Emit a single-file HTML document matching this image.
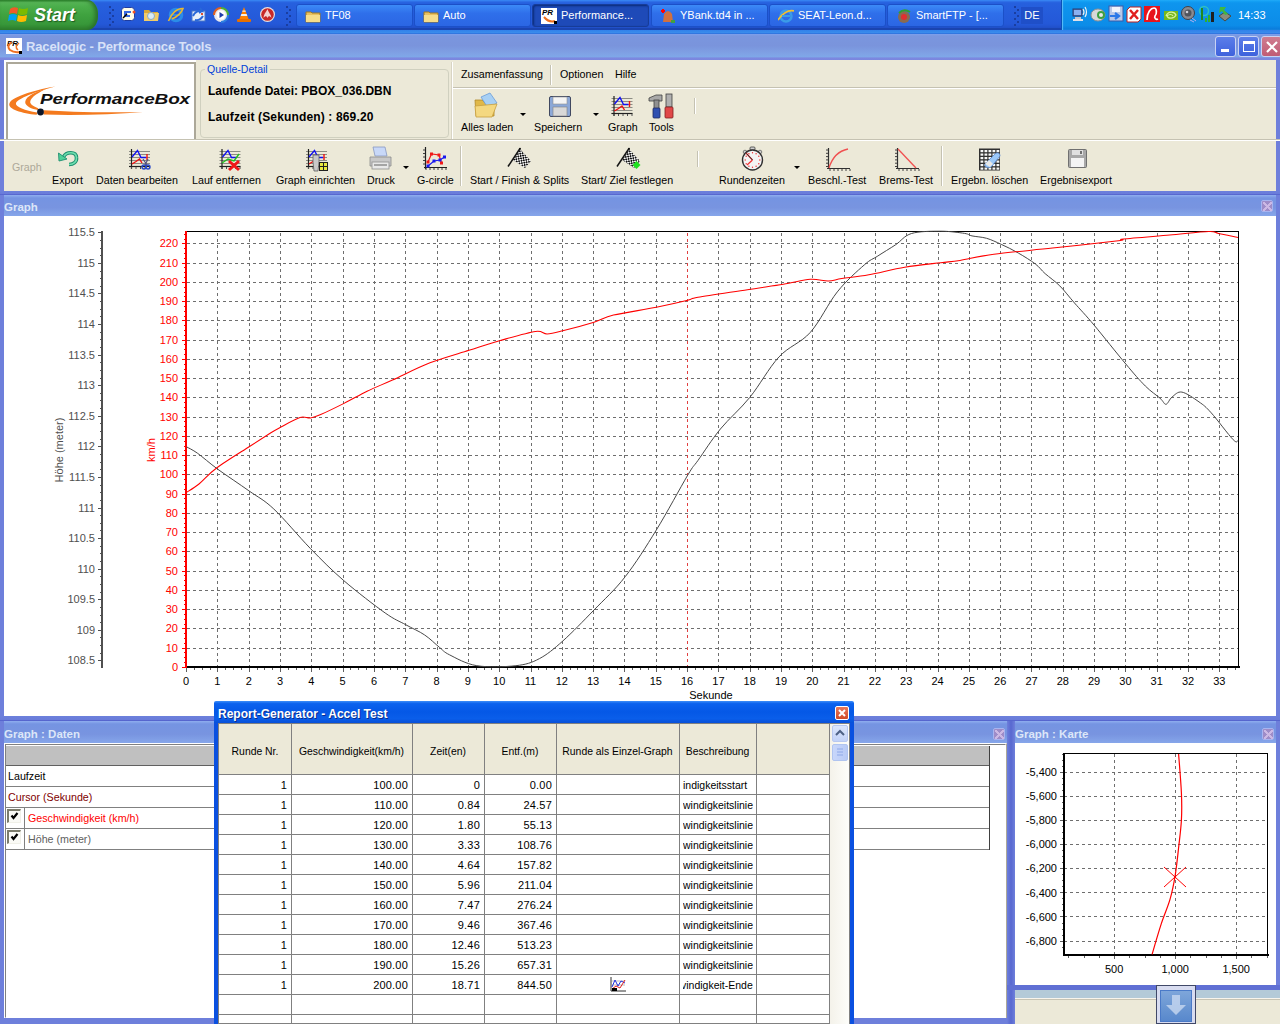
<!DOCTYPE html><html><head><meta charset="utf-8"><title>Racelogic - Performance Tools</title><style>

*{box-sizing:border-box;margin:0;padding:0}
html,body{width:1280px;height:1024px;overflow:hidden;background:#ECE9D8;font-family:"Liberation Sans", sans-serif;font-size:11px;color:#000}
.a{position:absolute}
.gl{position:absolute;font-size:11px;line-height:14px;white-space:nowrap;color:#000}
.r{text-align:right} .c{text-align:center}
.tb{position:absolute;top:4px;height:23px;width:117px;border-radius:3px;background:linear-gradient(#3C8AF7,#2F6FEA 40%,#2B66E4);border:1px solid #1B50C8;color:#fff;font-size:11px;line-height:21px;padding-left:28px;white-space:nowrap;overflow:hidden}
.tb.act{background:#1E4AB8;border-color:#173C98;box-shadow:inset 1px 1px 2px #0A2A78}
.tbi{position:absolute;left:8px;top:3px;width:16px;height:16px}
.ph{position:absolute;height:23px;background:linear-gradient(#8FAEEF 0,#7594E2 3px,#7894E0 60%,#86A6EA 100%);color:#DCE6F8;font-weight:bold;font-size:11.5px;padding-top:2px;padding-left:0px;white-space:nowrap;overflow:hidden}
.pc{position:absolute;width:12px;height:12px;background:#9E8CC8;border:1px solid #A8B4F0;border-radius:2px} .pc:after{content:'';position:absolute;left:1px;top:1px;width:9px;height:9px;background:linear-gradient(45deg,transparent 40%,#CCB8E4 40%,#CCB8E4 60%,transparent 60%),linear-gradient(-45deg,transparent 40%,#CCB8E4 40%,#CCB8E4 60%,transparent 60%)}
.tl{position:absolute;font-size:10.7px;line-height:13px;white-space:nowrap}
.sep{position:absolute;width:2px;border-left:1px solid #C5C2B2;border-right:1px solid #fff}
.cell{position:absolute;height:19px;line-height:19px;font-size:11px;white-space:nowrap;overflow:hidden;text-align:right;padding-right:4px}

</style></head><body>
<div class="a" style="left:0;top:0;width:1280px;height:30px;background:linear-gradient(#3A8BF5 0,#2A67E2 2px,#2660DE 10%,#2458D8 80%,#1F4BC0 100%)"></div>
<div class="a" style="left:0;top:28px;width:1280px;height:6px;background:linear-gradient(#1A44B0 0,#1A44B0 28%,#3282EA 35%,#3A8CEC 80%,#2A68D8 100%)"></div>
<div class="a" style="left:0;top:0;width:98px;height:30px;border-radius:0 11px 11px 0/0 14px 14px 0;background:linear-gradient(#2C8A2C 0,#58B858 8%,#4BAE4B 20%,#3FA23F 50%,#38983A 80%,#2E822E 100%);box-shadow:inset -3px 0 4px #2A702A"></div>
<svg class="a" style="left:8px;top:5px" width="22" height="20" viewBox="0 0 22 20">
<path d="M2 4 Q5 1 10 3 L9 9 Q5 7 1 9Z" fill="#F05A28"/><path d="M11 3 Q15 5 20 3 L19 9 Q14 11 10 9Z" fill="#7CBB00"/>
<path d="M1 10 Q5 8 9 10 L8 16 Q4 14 0 16Z" fill="#00A1F1"/><path d="M10 10 Q14 12 19 10 L18 16 Q13 18 9 16Z" fill="#FFBB00"/></svg>
<div class="a" style="left:34px;top:4px;font-size:18px;line-height:22px;font-style:italic;font-weight:bold;color:#fff;text-shadow:1px 1px 1px #1E5A1E">Start</div>
<div class="a" style="left:109px;top:6px;width:2px;height:2px;background:#1A3EA0"></div>
<div class="a" style="left:112px;top:9px;width:2px;height:2px;background:#1A3EA0"></div>
<div class="a" style="left:109px;top:12px;width:2px;height:2px;background:#1A3EA0"></div>
<div class="a" style="left:112px;top:15px;width:2px;height:2px;background:#1A3EA0"></div>
<div class="a" style="left:109px;top:18px;width:2px;height:2px;background:#1A3EA0"></div>
<div class="a" style="left:112px;top:21px;width:2px;height:2px;background:#1A3EA0"></div>
<div class="a" style="left:109px;top:24px;width:2px;height:2px;background:#1A3EA0"></div>
<div class="a" style="left:286px;top:6px;width:2px;height:2px;background:#1A3EA0"></div>
<div class="a" style="left:289px;top:9px;width:2px;height:2px;background:#1A3EA0"></div>
<div class="a" style="left:286px;top:12px;width:2px;height:2px;background:#1A3EA0"></div>
<div class="a" style="left:289px;top:15px;width:2px;height:2px;background:#1A3EA0"></div>
<div class="a" style="left:286px;top:18px;width:2px;height:2px;background:#1A3EA0"></div>
<div class="a" style="left:289px;top:21px;width:2px;height:2px;background:#1A3EA0"></div>
<div class="a" style="left:286px;top:24px;width:2px;height:2px;background:#1A3EA0"></div>
<div class="a" style="left:1014px;top:6px;width:2px;height:2px;background:#1A3EA0"></div>
<div class="a" style="left:1017px;top:9px;width:2px;height:2px;background:#1A3EA0"></div>
<div class="a" style="left:1014px;top:12px;width:2px;height:2px;background:#1A3EA0"></div>
<div class="a" style="left:1017px;top:15px;width:2px;height:2px;background:#1A3EA0"></div>
<div class="a" style="left:1014px;top:18px;width:2px;height:2px;background:#1A3EA0"></div>
<div class="a" style="left:1017px;top:21px;width:2px;height:2px;background:#1A3EA0"></div>
<div class="a" style="left:1014px;top:24px;width:2px;height:2px;background:#1A3EA0"></div>
<svg class="a" style="left:120px;top:6px" width="17" height="17">
<rect x="1.5" y="1.5" width="13" height="13" rx="3" fill="#FFFDE8" stroke="#1E3CA0"/><path d="M4 5 H11 V7 H7 V9 H10 V11 H4Z" fill="#3A6AE0"/><path d="M7 8 L3 12" stroke="#000" stroke-width="1.5"/><circle cx="14" cy="6" r="1.5" fill="#F05020"/></svg>
<svg class="a" style="left:143px;top:7px" width="17" height="16">
<path d="M1 3 H6 L8 5 H15 V14 H1Z" fill="#D8A838"/><path d="M1 6 H16 L15 14 H1Z" fill="#F2CC68"/><circle cx="8" cy="9" r="3.5" fill="#D8ECF8" stroke="#8AA8C0"/></svg>
<svg class="a" style="left:167px;top:6px" width="17" height="17">
<circle cx="9" cy="9" r="5.8" fill="none" stroke="#2A8CE8" stroke-width="3"/><rect x="5" y="8" width="8" height="2" fill="#2A8CE8"/><path d="M1.5 15 C4 8 10 2 16 2.5 C15 6 10 11 5 13" fill="none" stroke="#E8B830" stroke-width="1.6"/></svg>
<svg class="a" style="left:190px;top:6px" width="16" height="17">
<rect x="2" y="5" width="13" height="10" fill="#E8F0FA" stroke="#4A78C8"/><path d="M3 10 Q6 4 12 5 L10 2 M12 5 L9 7" stroke="#2A68D8" stroke-width="2" fill="none"/><path d="M13 10 Q10 15 5 14" stroke="#2A68D8" stroke-width="2" fill="none"/><rect x="11" y="7" width="2" height="2" fill="#E05030"/></svg>
<svg class="a" style="left:213px;top:6px" width="16" height="17">
<circle cx="8" cy="9" r="7" fill="#E8E8EE"/><path d="M1 9 A7 7 0 0 1 8 2" stroke="#E06020" stroke-width="2" fill="none"/><path d="M8 2 A7 7 0 0 1 15 9" stroke="#50B030" stroke-width="2" fill="none"/><path d="M15 9 A7 7 0 0 1 8 16" stroke="#3080E0" stroke-width="2" fill="none"/><circle cx="8" cy="9" r="4.5" fill="#fff"/><path d="M6.5 6 L11 9 L6.5 12Z" fill="#1E3CA8"/></svg>
<svg class="a" style="left:236px;top:6px" width="16" height="17">
<path d="M8 1 L13 14 H3Z" fill="#FF8000"/><path d="M5.3 8 H10.7 L11.3 10 H4.7Z" fill="#F0F0F0"/><path d="M6.6 4.5 H9.4 L9.8 5.8 H6.2Z" fill="#F0F0F0"/><rect x="1" y="13" width="14" height="3" rx="1" fill="#E87000"/></svg>
<svg class="a" style="left:259px;top:6px" width="17" height="17">
<circle cx="8.5" cy="8.5" r="7.5" fill="#E8E0E0"/><circle cx="8.5" cy="8.5" r="6.3" fill="#C82828"/><path d="M4.5 12 C5 7 8 5 8.5 3 C9 6 12 8 12.5 12 C11 10 9.5 9.5 8.5 12 C7.5 9.5 6 10 4.5 12Z" fill="#F4D0D0"/></svg>
<div class="tb" style="left:296px"><svg class="tbi" width="16" height="16"><path d="M1 4 L6 4 L7 5 L15 5 L15 14 L1 14Z" fill="#E8C060" stroke="#A07820" stroke-width="1"/><path d="M1 7 L15 7 L15 14 L1 14Z" fill="#F6DC8A"/></svg>TF08</div>
<div class="tb" style="left:414px"><svg class="tbi" width="16" height="16"><path d="M1 4 L6 4 L7 5 L15 5 L15 14 L1 14Z" fill="#E8C060" stroke="#A07820" stroke-width="1"/><path d="M1 7 L15 7 L15 14 L1 14Z" fill="#F6DC8A"/></svg>Auto</div>
<div class="tb act" style="left:532px"><svg class="tbi" width="16" height="16"><rect width="16" height="16" fill="#fff"/><text x="1" y="7" font-size="8" font-weight="bold" font-style="italic" font-family="Liberation Sans">PR</text><path d="M3 9 Q8 15 14 13" stroke="#F07020" stroke-width="2" fill="none"/><rect x="13" y="13" width="3" height="3" fill="#000"/></svg>Performance...</div>
<div class="tb" style="left:651px"><svg class="tbi" width="16" height="16"><path d="M4 6 Q8 0 12 6 L13 14 L3 14Z" fill="#D07040"/><path d="M1 3 L5 3 M3 1 L3 5" stroke="#f00" stroke-width="2"/><rect x="11" y="12" width="4" height="3" fill="#40A040"/></svg>YBank.td4 in ...</div>
<div class="tb" style="left:769px"><svg class="tbi" width="16" height="16"><circle cx="8" cy="8" r="5.5" fill="none" stroke="#3A9BE8" stroke-width="2.5"/><path d="M0 12 Q8 1 16 3" fill="none" stroke="#F0C030" stroke-width="1.8"/><rect x="4" y="7" width="8" height="2" fill="#3A9BE8"/></svg>SEAT-Leon.d...</div>
<div class="tb" style="left:887px"><svg class="tbi" width="16" height="16"><circle cx="8" cy="9" r="6" fill="#8A6A50"/><path d="M3 5 Q8 0 14 4" stroke="#30A030" stroke-width="2" fill="none"/><circle cx="8" cy="9" r="3" fill="#E03030"/></svg>SmartFTP - [...</div>
<div class="a" style="left:1021px;top:7px;width:22px;height:17px;background:#1F4FC8;color:#fff;font-size:11px;line-height:17px;text-align:center">DE</div>
<div class="a" style="left:1061px;top:0;width:219px;height:30px;background:linear-gradient(#18A8F8 0,#0E95EE 10%,#0C8CE8 85%,#0A78D8 100%);border-left:1px solid #0A50B8;box-shadow:inset 1px 0 1px #5CC0F8"></div>
<svg class="a" style="left:1072px;top:6px" width="17" height="17">
<rect x="1" y="3" width="9" height="7" fill="#5870A8" stroke="#2A3A70"/><rect x="2" y="4" width="7" height="5" fill="#8AB0F0"/><rect x="3" y="11" width="6" height="2" fill="#C8C8D0"/><rect x="1" y="13" width="10" height="2" fill="#E0E0E8"/><path d="M11 3 Q13 6 11 9 M13 1 Q16 6 13 11" stroke="#F0F0F0" stroke-width="1.2" fill="none"/></svg>
<svg class="a" style="left:1090px;top:6px" width="16" height="17"><ellipse cx="8" cy="9" rx="7" ry="6" fill="#D8D8D8" stroke="#909090"/><circle cx="11" cy="9" r="4" fill="#3EA040"/><circle cx="11" cy="9" r="2" fill="#E8E8E8"/></svg>
<svg class="a" style="left:1108px;top:5px" width="16" height="18"><rect x="1" y="1" width="14" height="15" fill="#B8C8E8" stroke="#3A5AA8"/><rect x="4" y="2" width="8" height="5" fill="#F0F4FC"/><path d="M2 11 H10 M7 8 L11 11 L7 14" stroke="#2A78E8" stroke-width="2.2" fill="none"/></svg>
<svg class="a" style="left:1126px;top:6px" width="16" height="17"><path d="M1 4 L4 1 H15 V13 L12 16 H1Z" fill="#fff" stroke="#C02020"/><path d="M4 4 L12 13 M12 4 L4 13" stroke="#E02020" stroke-width="2.5"/></svg>
<svg class="a" style="left:1144px;top:6px" width="16" height="16"><rect width="16" height="16" fill="#E8141C"/><path d="M3 14 C3 6 7 2 10 2 C13 2 13 8 11 10 C10 12 12 14 14 13" stroke="#fff" stroke-width="1.7" fill="none"/></svg>
<svg class="a" style="left:1163px;top:7px" width="16" height="15"><path d="M1 4 H15 V13 H1Z" fill="#78B81C"/><path d="M3 9 C5 4 11 4 13 8 C11 12 5 12 4 9 C6 7 9 7 10 9" stroke="#D8F0A0" stroke-width="1.2" fill="none"/></svg>
<svg class="a" style="left:1180px;top:5px" width="17" height="18"><circle cx="8" cy="8" r="6.5" fill="#8A8A90" stroke="#404048"/><circle cx="8" cy="8" r="3.5" fill="#50545C"/><circle cx="7" cy="7" r="1.3" fill="#D0D0D8"/><path d="M12 13 L16 16 M10 15 L14 17" stroke="#B0B0F0" stroke-width="1"/></svg>
<svg class="a" style="left:1198px;top:5px" width="17" height="18"><circle cx="6" cy="6" r="4.5" fill="none" stroke="#30C0C0" stroke-width="1.5"/><rect x="3" y="3" width="2" height="12" fill="#208820"/><rect x="7" y="13" width="2" height="4" fill="#30B030"/><rect x="10" y="10" width="2" height="7" fill="#30B030"/><rect x="13" y="7" width="3" height="10" fill="#202020"/></svg>
<svg class="a" style="left:1216px;top:5px" width="17" height="18"><path d="M3 11 L9 7 L15 11 L9 16Z" fill="#8C8C7C" stroke="#4A4A40"/><path d="M4 2 L10 2 L8 5 L12 9 L9 10 L6 6 L3 8Z" fill="#40B840"/></svg>
<div class="a" style="left:1238px;top:8px;color:#fff;font-size:11px;line-height:14px">14:33</div>
<div class="a" style="left:0;top:34px;width:1280px;height:26px;background:linear-gradient(#7EA0EC 0,#7A96DE 2px,#7A94DC 45%,#80A4E6 80%,#7EA8E8 88%,#7C88E0 92%,#7A86DE 100%)"></div>
<svg class="a" style="left:6px;top:38px" width="16" height="16"><rect width="16" height="16" fill="#fff"/><text x="1" y="7.5" font-size="8" font-weight="bold" font-style="italic" font-family="Liberation Sans">PR</text><path d="M6 4 Q0 8 4 12 Q8 15 14 14" stroke="#F07020" stroke-width="2" fill="none"/><path d="M13 5 Q8 9 12 12" stroke="#F07020" stroke-width="1.5" fill="none"/><rect x="13" y="13" width="3" height="3" fill="#000"/></svg>
<div class="a" style="left:26px;top:39px;font-size:13px;line-height:16px;font-weight:bold;color:#D8E2F8;letter-spacing:-0.15px">Racelogic - Performance Tools</div>
<div class="a" style="left:1215px;top:36px;width:21px;height:21px;border-radius:3px;background:linear-gradient(#5B7EEA,#3E62DC);border:1px solid #C8D2F4"><div class="a" style="left:5px;top:12px;width:8px;height:3px;background:#fff"></div></div>
<div class="a" style="left:1238px;top:36px;width:21px;height:21px;border-radius:3px;background:linear-gradient(#5B7EEA,#3E62DC);border:1px solid #C8D2F4"><div class="a" style="left:4px;top:4px;width:12px;height:11px;border:1px solid #fff;border-top:3px solid #fff"></div></div>
<div class="a" style="left:1261px;top:36px;width:21px;height:21px;border-radius:3px;background:linear-gradient(#D07C90,#C05C74);border:1px solid #C8D2F4"><svg width="21" height="21" style="position:absolute;left:0;top:0"><path d="M5 5 L15 15 M15 5 L5 15" stroke="#fff" stroke-width="2.2"/></svg></div>
<div class="a" style="left:0;top:60px;width:4px;height:964px;background:#6E7FDB"></div>
<div class="a" style="left:1276px;top:60px;width:4px;height:930px;background:#6E7FDB"></div>
<div class="a" style="left:4px;top:60px;width:192px;height:81px;background:#fff;border-right:1px solid #fff"></div>
<div class="a" style="left:6px;top:62px;width:190px;height:79px;border:2px solid #ACA899;border-right-color:#ACA899;background:#fff"></div>
<svg class="a" style="left:0;top:0" width="200" height="140">
<path d="M55.3,86.6 C40,89 12,96 9.4,103.5 C7.5,109 22,113.5 36.7,114.8 L37.3,112.6 C25,110.5 15.5,107 15.9,103.5 C17,99 36,91.5 55.3,86.6 Z" fill="#F47A1E"/>
<path d="M47,88.6 C38,91 25.5,96 25.2,101.9 C25,106 32,109 38,109.9 L38.2,108.2 C33.5,106.2 30,104 30.2,101.9 C30.5,97 40,92 47,88.6 Z" fill="#F47A1E"/>
<path d="M43.5,110.2 C80,112.3 112,112.6 143,112.2 C112,114.2 80,115.8 43.5,114.6 Z" fill="#F47A1E"/>
<circle cx="40.5" cy="112" r="3.4" fill="#0E1628"/>
</svg>
<div class="a" style="left:39.5px;top:90.5px;font-size:14.6px;line-height:17px;font-weight:bold;font-style:italic;color:#111;transform:scaleX(1.30);transform-origin:0 0;letter-spacing:-0.1px">PerformanceBox</div>
<div class="a" style="left:200px;top:69px;width:249px;height:69px;border:1px solid #D0D0BF;border-radius:4px"></div>
<div class="a" style="left:205px;top:62px;padding:0 2px;background:#ECE9D8;color:#0040D8;font-size:10.5px;line-height:14px">Quelle-Detail</div>
<div class="a" style="left:208px;top:84px;font-size:12px;line-height:15px;font-weight:bold">Laufende Datei: PBOX_036.DBN</div>
<div class="a" style="left:208px;top:110px;font-size:12px;line-height:15px;font-weight:bold;letter-spacing:0.15px">Laufzeit (Sekunden) : 869.20</div>
<div class="a" style="left:451px;top:62px;width:2px;height:77px;border-left:1px solid #D8D4C4;border-right:1px solid #fff"></div>
<div class="a" style="left:453px;top:87px;width:823px;height:2px;border-top:1px solid #C5C2B2;border-bottom:1px solid #fff"></div>
<div class="a" style="left:0;top:139px;width:1280px;height:2px;border-top:1px solid #C5C2B2;border-bottom:1px solid #fff"></div>
<div class="tl a" style="left:461px;top:68px">Zusamenfassung</div>
<div class="sep" style="left:550px;top:65px;height:20px"></div>
<div class="tl a" style="left:560px;top:68px">Optionen</div>
<div class="tl a" style="left:615px;top:68px">Hilfe</div>
<div class="tl a" style="left:461px;top:121px">Alles laden</div>
<div class="tl a" style="left:534px;top:121px">Speichern</div>
<div class="tl a" style="left:608px;top:121px">Graph</div>
<div class="tl a" style="left:649px;top:121px">Tools</div>
<div class="a" style="left:520px;top:113px;width:0;height:0;border-left:3px solid transparent;border-right:3px solid transparent;border-top:3px solid #000"></div>
<div class="a" style="left:593px;top:113px;width:0;height:0;border-left:3px solid transparent;border-right:3px solid transparent;border-top:3px solid #000"></div>
<div class="sep" style="left:694px;top:98px;height:16px"></div>
<div class="tl a" style="left:52px;top:174px">Export</div>
<div class="tl a" style="left:96px;top:174px">Daten bearbeiten</div>
<div class="tl a" style="left:192px;top:174px">Lauf entfernen</div>
<div class="tl a" style="left:276px;top:174px">Graph einrichten</div>
<div class="tl a" style="left:367px;top:174px">Druck</div>
<div class="tl a" style="left:417px;top:174px">G-circle</div>
<div class="tl a" style="left:470px;top:174px">Start / Finish &amp; Splits</div>
<div class="tl a" style="left:581px;top:174px">Start/ Ziel festlegen</div>
<div class="tl a" style="left:719px;top:174px">Rundenzeiten</div>
<div class="tl a" style="left:808px;top:174px">Beschl.-Test</div>
<div class="tl a" style="left:879px;top:174px">Brems-Test</div>
<div class="tl a" style="left:951px;top:174px">Ergebn. l&ouml;schen</div>
<div class="tl a" style="left:1040px;top:174px">Ergebnisexport</div>
<div class="tl a" style="left:12px;top:161px;color:#ACA899">Graph</div>
<div class="a" style="left:403px;top:166px;width:0;height:0;border-left:3px solid transparent;border-right:3px solid transparent;border-top:3px solid #000"></div>
<div class="a" style="left:794px;top:166px;width:0;height:0;border-left:3px solid transparent;border-right:3px solid transparent;border-top:3px solid #000"></div>
<div class="sep" style="left:460px;top:146px;height:40px"></div>
<div class="sep" style="left:697px;top:151px;height:16px"></div>
<div class="sep" style="left:941px;top:146px;height:40px"></div>
<svg class="a" style="left:0;top:0" width="1280" height="195"><path d="M475 100 H482 L484 102 H494 V116 H476Z" fill="#E0B848" stroke="#B08828" stroke-width=".8"/><path d="M481 97 L490 93 L497 103 L488 108Z" fill="#A8D0F4" stroke="#6A9CD8" stroke-width=".8"/><path d="M475 106 L497 104 L492 117 L476 117Z" fill="#F4D880" stroke="#C8A040" stroke-width=".8"/><rect x="549.5" y="96.5" width="21" height="20" rx="1.5" fill="#8CA8D8" stroke="#404860"/><rect x="553" y="97" width="14" height="7" fill="#F4F4F4" stroke="#909090" stroke-width=".6"/><rect x="553" y="107" width="14" height="9" fill="#D8D8D8" stroke="#808080" stroke-width=".6"/><path d="M611.5 98.5 H632.5" stroke="#8C8C84" stroke-width="1"/><path d="M611.5 101.5 H632.5" stroke="#8C8C84" stroke-width="1"/><path d="M611.5 104.5 H632.5" stroke="#8C8C84" stroke-width="1"/><path d="M611.5 107.5 H632.5" stroke="#8C8C84" stroke-width="1"/><path d="M611.5 110.5 H632.5" stroke="#8C8C84" stroke-width="1"/><path d="M611.5 113.5 H632.5" stroke="#8C8C84" stroke-width="1"/><path d="M614.0 96 V116" stroke="#202020" stroke-width="1.2"/><path d="M611.5 113.5 H632.5" stroke="#202020" stroke-width="1.2"/><path d="M614.0 114 V116" stroke="#505050"/><path d="M618.5 114 V116" stroke="#505050"/><path d="M623.0 114 V116" stroke="#505050"/><path d="M627.5 114 V116" stroke="#505050"/><path d="M632.0 114 V116" stroke="#505050"/><path d="M614.5 104 L620.0 97.5 L623.5 104.5 H628.5" stroke="#1010F0" stroke-width="1.4" fill="none"/><path d="M614.5 111 L618.5 108.5 L622.0 106 L624.5 110 M629.5 101 V107" stroke="#F01010" stroke-width="1.4" fill="none"/><path d="M649 98 L656 95 H662 V101 H656 L649 101Z" fill="#A8A8A8" stroke="#404040" stroke-width=".8"/><rect x="654" y="100" width="5" height="9" fill="#909090" stroke="#404040" stroke-width=".8"/><rect x="653" y="108" width="7" height="10" rx="1" fill="#3050B0" stroke="#202860" stroke-width=".8"/><rect x="666" y="94" width="6" height="13" fill="#B0B0B0" stroke="#404040" stroke-width=".8"/><rect x="665" y="107" width="8" height="11" rx="1" fill="#E04848" stroke="#802020" stroke-width=".8"/><path d="M63.5 157 C66 151.5 76 151 76.5 157.5 C77 162 73.5 164.5 69 164.5" stroke="#1E9070" stroke-width="3.6" fill="none"/><path d="M63.5 157 C66 151.5 76 151 76.5 157.5 C77 162 73.5 164.5 69 164.5" stroke="#70E0B0" stroke-width="1.6" fill="none"/><path d="M58.5 153 L59 161 L67 159Z" fill="#50D098" stroke="#1E9070" stroke-width=".9"/><path d="M129 151.5 H150" stroke="#8C8C84" stroke-width="1"/><path d="M129 154.5 H150" stroke="#8C8C84" stroke-width="1"/><path d="M129 157.5 H150" stroke="#8C8C84" stroke-width="1"/><path d="M129 160.5 H150" stroke="#8C8C84" stroke-width="1"/><path d="M129 163.5 H150" stroke="#8C8C84" stroke-width="1"/><path d="M129 166.5 H150" stroke="#8C8C84" stroke-width="1"/><path d="M131.5 149 V169" stroke="#202020" stroke-width="1.2"/><path d="M129 166.5 H150" stroke="#202020" stroke-width="1.2"/><path d="M131.5 167 V169" stroke="#505050"/><path d="M136.0 167 V169" stroke="#505050"/><path d="M140.5 167 V169" stroke="#505050"/><path d="M145.0 167 V169" stroke="#505050"/><path d="M149.5 167 V169" stroke="#505050"/><path d="M132 157 L137.5 150.5 L141 157.5 H146" stroke="#1010F0" stroke-width="1.4" fill="none"/><path d="M132 164 L136 161.5 L139.5 159 L142 163 M147 154 V160" stroke="#F01010" stroke-width="1.4" fill="none"/><circle cx="144" cy="167" r="2" fill="none" stroke="#2848C8" stroke-width="1.4"/><circle cx="148" cy="167" r="2" fill="none" stroke="#2848C8" stroke-width="1.4"/><path d="M143 159 L147 165 M148 159 L145 165" stroke="#505080" stroke-width="1.2"/><path d="M219.5 151.5 H240.5" stroke="#8C8C84" stroke-width="1"/><path d="M219.5 154.5 H240.5" stroke="#8C8C84" stroke-width="1"/><path d="M219.5 157.5 H240.5" stroke="#8C8C84" stroke-width="1"/><path d="M219.5 160.5 H240.5" stroke="#8C8C84" stroke-width="1"/><path d="M219.5 163.5 H240.5" stroke="#8C8C84" stroke-width="1"/><path d="M219.5 166.5 H240.5" stroke="#8C8C84" stroke-width="1"/><path d="M222.0 149 V169" stroke="#202020" stroke-width="1.2"/><path d="M219.5 166.5 H240.5" stroke="#202020" stroke-width="1.2"/><path d="M222.0 167 V169" stroke="#505050"/><path d="M226.5 167 V169" stroke="#505050"/><path d="M231.0 167 V169" stroke="#505050"/><path d="M235.5 167 V169" stroke="#505050"/><path d="M240.0 167 V169" stroke="#505050"/><path d="M222.5 157 L228.0 150.5 L231.5 157.5 H236.5" stroke="#1010F0" stroke-width="1.4" fill="none"/><path d="M222 163 L228 159 L234 161 L239 154" stroke="#20C020" stroke-width="1.4" fill="none"/><path d="M229 161 L239 170 M239 161 L229 170" stroke="#F01818" stroke-width="3"/><path d="M306 151.5 H327" stroke="#8C8C84" stroke-width="1"/><path d="M306 154.5 H327" stroke="#8C8C84" stroke-width="1"/><path d="M306 157.5 H327" stroke="#8C8C84" stroke-width="1"/><path d="M306 160.5 H327" stroke="#8C8C84" stroke-width="1"/><path d="M306 163.5 H327" stroke="#8C8C84" stroke-width="1"/><path d="M306 166.5 H327" stroke="#8C8C84" stroke-width="1"/><path d="M308.5 149 V169" stroke="#202020" stroke-width="1.2"/><path d="M306 166.5 H327" stroke="#202020" stroke-width="1.2"/><path d="M308.5 167 V169" stroke="#505050"/><path d="M313.0 167 V169" stroke="#505050"/><path d="M317.5 167 V169" stroke="#505050"/><path d="M322.0 167 V169" stroke="#505050"/><path d="M326.5 167 V169" stroke="#505050"/><path d="M309 157 L314.5 150.5 L318 157.5 H323" stroke="#1010F0" stroke-width="1.4" fill="none"/><path d="M309 164 L313 161.5 L316.5 159 L319 163 M324 154 V160" stroke="#F01010" stroke-width="1.4" fill="none"/><path d="M313 155 H319 V162 L318 171 H314 L313 162Z" fill="#C8C8C8" stroke="#606060" stroke-width=".8"/><rect x="319.5" y="162.5" width="8" height="8" fill="#E8E840" stroke="#202020"/><path d="M319.5 166.5 H327.5 M323.5 162.5 V170.5" stroke="#202020"/><path d="M373 147 H385 L387 156 H375Z" fill="#C8D8F8" stroke="#8898C0" stroke-width=".8"/><path d="M370 157 H391 V166 H370Z" fill="#C8C8C8" stroke="#8C8C8C" stroke-width=".8"/><rect x="372" y="162" width="17" height="7" fill="#E8E8E8" stroke="#909090" stroke-width=".8"/><path d="M374 165 H387" stroke="#606060"/><path d="M425.5 147 V169 M424 167.5 H447" stroke="#202020" stroke-width="1.2"/><path d="M426 168 V170" stroke="#404040"/><path d="M430 168 V170" stroke="#404040"/><path d="M434 168 V170" stroke="#404040"/><path d="M438 168 V170" stroke="#404040"/><path d="M442 168 V170" stroke="#404040"/><path d="M446 168 V170" stroke="#404040"/><path d="M423 150.0 H425" stroke="#404040"/><path d="M423 153.5 H425" stroke="#404040"/><path d="M423 157.0 H425" stroke="#404040"/><path d="M423 160.5 H425" stroke="#404040"/><path d="M423 164.0 H425" stroke="#404040"/><path d="M428 162 L431.5 154 L439 155 L441.5 163" stroke="#F01818" stroke-width="1.2" fill="none"/><rect x="426.5" y="160.5" width="3" height="3" fill="#F01818"/><rect x="430.0" y="152.5" width="3" height="3" fill="#F01818"/><rect x="437.5" y="153.5" width="3" height="3" fill="#F01818"/><rect x="440.0" y="161.5" width="3" height="3" fill="#F01818"/><path d="M428 166 L434 161 L440 160 L444.5 157" stroke="#1818F0" stroke-width="1.2" fill="none"/><rect x="426.5" y="164.5" width="3" height="3" fill="#1818F0"/><rect x="432.5" y="159.5" width="3" height="3" fill="#1818F0"/><rect x="438.5" y="158.5" width="3" height="3" fill="#1818F0"/><rect x="443.0" y="155.5" width="3" height="3" fill="#1818F0"/><defs><pattern id="chk508" width="3.4" height="3.4" patternUnits="userSpaceOnUse" patternTransform="rotate(35)"><rect width="3.4" height="3.4" fill="#F4F4F4"/><rect width="1.7" height="1.7" fill="#111"/><rect x="1.7" y="1.7" width="1.7" height="1.7" fill="#111"/></pattern></defs><path d="M520 149 L531 161 L525 168 L513 160Z" fill="url(#chk508)"/><path d="M508 166.5 L520 148.5" stroke="#151515" stroke-width="1.5"/><circle cx="520" cy="148.8" r="1" fill="#111"/><defs><pattern id="chk617" width="3.4" height="3.4" patternUnits="userSpaceOnUse" patternTransform="rotate(35)"><rect width="3.4" height="3.4" fill="#F4F4F4"/><rect width="1.7" height="1.7" fill="#111"/><rect x="1.7" y="1.7" width="1.7" height="1.7" fill="#111"/></pattern></defs><path d="M629 149 L640 161 L634 168 L622 160Z" fill="url(#chk617)"/><path d="M617 166.5 L629 148.5" stroke="#151515" stroke-width="1.5"/><circle cx="629" cy="148.8" r="1" fill="#111"/><path d="M636.5 161 L640.5 165 L636.5 169 L632.5 165Z" fill="#20E020"/><rect x="750" y="147" width="5" height="3" rx="1" fill="#D0D0D0" stroke="#404040" stroke-width=".8"/><circle cx="745" cy="152" r="1.8" fill="#D0D0D0" stroke="#404040" stroke-width=".6"/><circle cx="760" cy="152" r="1.8" fill="#D0D0D0" stroke="#404040" stroke-width=".6"/><circle cx="752.5" cy="160" r="10" fill="#F4F4F4" stroke="#303030" stroke-width="1.4"/><circle cx="759.8" cy="160.0" r=".7" fill="#F03030"/><circle cx="758.8" cy="163.7" r=".7" fill="#F03030"/><circle cx="756.1" cy="166.3" r=".7" fill="#F03030"/><circle cx="752.5" cy="167.3" r=".7" fill="#F03030"/><circle cx="748.9" cy="166.3" r=".7" fill="#F03030"/><circle cx="746.2" cy="163.7" r=".7" fill="#F03030"/><circle cx="745.2" cy="160.0" r=".7" fill="#F03030"/><circle cx="746.2" cy="156.3" r=".7" fill="#F03030"/><circle cx="748.9" cy="153.7" r=".7" fill="#F03030"/><circle cx="752.5" cy="152.7" r=".7" fill="#F03030"/><circle cx="756.1" cy="153.7" r=".7" fill="#F03030"/><circle cx="758.8" cy="156.3" r=".7" fill="#F03030"/><path d="M752.5 160 L746 153 M752.5 160 L747 165" stroke="#F03030" stroke-width="1.2"/><path d="M752.5 160 L746.5 153.5" stroke="#303030" stroke-width="1"/><path d="M828.5 148 V169 M827 168.5 H850" stroke="#303030" stroke-width="1.2"/><path d="M830 169 V171" stroke="#404040"/><path d="M834 169 V171" stroke="#404040"/><path d="M838 169 V171" stroke="#404040"/><path d="M842 169 V171" stroke="#404040"/><path d="M846 169 V171" stroke="#404040"/><path d="M850 169 V171" stroke="#404040"/><path d="M826 150.0 H828" stroke="#404040"/><path d="M826 153.3 H828" stroke="#404040"/><path d="M826 156.6 H828" stroke="#404040"/><path d="M826 159.9 H828" stroke="#404040"/><path d="M826 163.2 H828" stroke="#404040"/><path d="M826 166.5 H828" stroke="#404040"/><path d="M829 168 C832 158 838 151 848 149" stroke="#F05050" stroke-width="1.3" fill="none"/><path d="M897.5 148 V169 M896 168.5 H919" stroke="#303030" stroke-width="1.2"/><path d="M899 169 V171" stroke="#404040"/><path d="M903 169 V171" stroke="#404040"/><path d="M907 169 V171" stroke="#404040"/><path d="M911 169 V171" stroke="#404040"/><path d="M915 169 V171" stroke="#404040"/><path d="M919 169 V171" stroke="#404040"/><path d="M895 150.0 H897" stroke="#404040"/><path d="M895 153.3 H897" stroke="#404040"/><path d="M895 156.6 H897" stroke="#404040"/><path d="M895 159.9 H897" stroke="#404040"/><path d="M895 163.2 H897" stroke="#404040"/><path d="M895 166.5 H897" stroke="#404040"/><path d="M898 149 L916 168" stroke="#F05050" stroke-width="1.3" fill="none"/><rect x="979" y="148.5" width="21" height="22" fill="#303030"/><rect x="980.5" y="150.0" width="2.8" height="2.2" fill="#F8F8F8"/><rect x="980.5" y="153.5" width="2.8" height="2.2" fill="#F8F8F8"/><rect x="980.5" y="157.0" width="2.8" height="2.2" fill="#F8F8F8"/><rect x="980.5" y="160.5" width="2.8" height="2.2" fill="#F8F8F8"/><rect x="980.5" y="164.0" width="2.8" height="2.2" fill="#F8F8F8"/><rect x="980.5" y="167.5" width="2.8" height="2.2" fill="#F8F8F8"/><rect x="984.5" y="150.0" width="2.8" height="2.2" fill="#F8F8F8"/><rect x="984.5" y="153.5" width="2.8" height="2.2" fill="#F8F8F8"/><rect x="984.5" y="157.0" width="2.8" height="2.2" fill="#F8F8F8"/><rect x="984.5" y="160.5" width="2.8" height="2.2" fill="#F8F8F8"/><rect x="984.5" y="164.0" width="2.8" height="2.2" fill="#F8F8F8"/><rect x="984.5" y="167.5" width="2.8" height="2.2" fill="#F8F8F8"/><rect x="988.5" y="150.0" width="2.8" height="2.2" fill="#F8F8F8"/><rect x="988.5" y="153.5" width="2.8" height="2.2" fill="#F8F8F8"/><rect x="988.5" y="157.0" width="2.8" height="2.2" fill="#F8F8F8"/><rect x="988.5" y="160.5" width="2.8" height="2.2" fill="#F8F8F8"/><rect x="988.5" y="164.0" width="2.8" height="2.2" fill="#F8F8F8"/><rect x="988.5" y="167.5" width="2.8" height="2.2" fill="#F8F8F8"/><rect x="992.5" y="150.0" width="2.8" height="2.2" fill="#F8F8F8"/><rect x="992.5" y="153.5" width="2.8" height="2.2" fill="#F8F8F8"/><rect x="992.5" y="157.0" width="2.8" height="2.2" fill="#F8F8F8"/><rect x="992.5" y="160.5" width="2.8" height="2.2" fill="#F8F8F8"/><rect x="992.5" y="164.0" width="2.8" height="2.2" fill="#F8F8F8"/><rect x="992.5" y="167.5" width="2.8" height="2.2" fill="#F8F8F8"/><rect x="996.5" y="150.0" width="2.8" height="2.2" fill="#F8F8F8"/><rect x="996.5" y="153.5" width="2.8" height="2.2" fill="#F8F8F8"/><rect x="996.5" y="157.0" width="2.8" height="2.2" fill="#F8F8F8"/><rect x="996.5" y="160.5" width="2.8" height="2.2" fill="#F8F8F8"/><rect x="996.5" y="164.0" width="2.8" height="2.2" fill="#F8F8F8"/><rect x="996.5" y="167.5" width="2.8" height="2.2" fill="#F8F8F8"/><path d="M985 164 L995 154 C997 152 1000 153 1000 156 L992 166 C990 168 987 168 985 166Z" fill="#9CC8F8" stroke="#5888D0" stroke-width=".8"/><path d="M985 164 L989 160 L993 164 L990 167Z" fill="#E8E8E8"/><rect x="1068.5" y="149.5" width="18" height="18" rx="1" fill="#A8A8A8" stroke="#707070"/><rect x="1072" y="150" width="11" height="5" fill="#E0E0E0"/><rect x="1080" y="151" width="2" height="3" fill="#707070"/><rect x="1071" y="158" width="13" height="9" fill="#F4F4F4"/></svg>
<div class="a" style="left:0;top:191px;width:1280px;height:4px;background:linear-gradient(#6C80DC 0,#6A7CDA 70%,#4C5AC8 100%)"></div>
<div class="ph" style="left:4px;top:195px;width:1272px;height:21px;line-height:21px">Graph</div>
<div class="pc" style="left:1261px;top:200px"></div>
<div class="a" style="left:4px;top:216px;width:1272px;height:500px;background:#fff"></div>
<svg width="1280" height="1024" style="position:absolute;left:0;top:0" shape-rendering="crispEdges">
<line x1="187" y1="648.5" x2="1239" y2="648.5" stroke="#6e6e6e" stroke-dasharray="3,3"/>
<line x1="187" y1="628.5" x2="1239" y2="628.5" stroke="#6e6e6e" stroke-dasharray="3,3"/>
<line x1="187" y1="609.5" x2="1239" y2="609.5" stroke="#6e6e6e" stroke-dasharray="3,3"/>
<line x1="187" y1="590.5" x2="1239" y2="590.5" stroke="#6e6e6e" stroke-dasharray="3,3"/>
<line x1="187" y1="571.5" x2="1239" y2="571.5" stroke="#6e6e6e" stroke-dasharray="3,3"/>
<line x1="187" y1="551.5" x2="1239" y2="551.5" stroke="#6e6e6e" stroke-dasharray="3,3"/>
<line x1="187" y1="532.5" x2="1239" y2="532.5" stroke="#6e6e6e" stroke-dasharray="3,3"/>
<line x1="187" y1="513.5" x2="1239" y2="513.5" stroke="#6e6e6e" stroke-dasharray="3,3"/>
<line x1="187" y1="494.5" x2="1239" y2="494.5" stroke="#6e6e6e" stroke-dasharray="3,3"/>
<line x1="187" y1="474.5" x2="1239" y2="474.5" stroke="#6e6e6e" stroke-dasharray="3,3"/>
<line x1="187" y1="455.5" x2="1239" y2="455.5" stroke="#6e6e6e" stroke-dasharray="3,3"/>
<line x1="187" y1="436.5" x2="1239" y2="436.5" stroke="#6e6e6e" stroke-dasharray="3,3"/>
<line x1="187" y1="417.5" x2="1239" y2="417.5" stroke="#6e6e6e" stroke-dasharray="3,3"/>
<line x1="187" y1="397.5" x2="1239" y2="397.5" stroke="#6e6e6e" stroke-dasharray="3,3"/>
<line x1="187" y1="378.5" x2="1239" y2="378.5" stroke="#6e6e6e" stroke-dasharray="3,3"/>
<line x1="187" y1="359.5" x2="1239" y2="359.5" stroke="#6e6e6e" stroke-dasharray="3,3"/>
<line x1="187" y1="340.5" x2="1239" y2="340.5" stroke="#6e6e6e" stroke-dasharray="3,3"/>
<line x1="187" y1="320.5" x2="1239" y2="320.5" stroke="#6e6e6e" stroke-dasharray="3,3"/>
<line x1="187" y1="301.5" x2="1239" y2="301.5" stroke="#6e6e6e" stroke-dasharray="3,3"/>
<line x1="187" y1="282.5" x2="1239" y2="282.5" stroke="#6e6e6e" stroke-dasharray="3,3"/>
<line x1="187" y1="263.5" x2="1239" y2="263.5" stroke="#6e6e6e" stroke-dasharray="3,3"/>
<line x1="187" y1="243.5" x2="1239" y2="243.5" stroke="#6e6e6e" stroke-dasharray="3,3"/>
<line x1="217.5" y1="233" x2="217.5" y2="666" stroke="#6e6e6e" stroke-dasharray="3,3"/>
<line x1="249.5" y1="233" x2="249.5" y2="666" stroke="#6e6e6e" stroke-dasharray="3,3"/>
<line x1="280.5" y1="233" x2="280.5" y2="666" stroke="#6e6e6e" stroke-dasharray="3,3"/>
<line x1="311.5" y1="233" x2="311.5" y2="666" stroke="#6e6e6e" stroke-dasharray="3,3"/>
<line x1="343.5" y1="233" x2="343.5" y2="666" stroke="#6e6e6e" stroke-dasharray="3,3"/>
<line x1="374.5" y1="233" x2="374.5" y2="666" stroke="#6e6e6e" stroke-dasharray="3,3"/>
<line x1="405.5" y1="233" x2="405.5" y2="666" stroke="#6e6e6e" stroke-dasharray="3,3"/>
<line x1="437.5" y1="233" x2="437.5" y2="666" stroke="#6e6e6e" stroke-dasharray="3,3"/>
<line x1="468.5" y1="233" x2="468.5" y2="666" stroke="#6e6e6e" stroke-dasharray="3,3"/>
<line x1="499.5" y1="233" x2="499.5" y2="666" stroke="#6e6e6e" stroke-dasharray="3,3"/>
<line x1="531.5" y1="233" x2="531.5" y2="666" stroke="#6e6e6e" stroke-dasharray="3,3"/>
<line x1="562.5" y1="233" x2="562.5" y2="666" stroke="#6e6e6e" stroke-dasharray="3,3"/>
<line x1="593.5" y1="233" x2="593.5" y2="666" stroke="#6e6e6e" stroke-dasharray="3,3"/>
<line x1="624.5" y1="233" x2="624.5" y2="666" stroke="#6e6e6e" stroke-dasharray="3,3"/>
<line x1="656.5" y1="233" x2="656.5" y2="666" stroke="#6e6e6e" stroke-dasharray="3,3"/>
<line x1="687.5" y1="233" x2="687.5" y2="666" stroke="#e04040" stroke-dasharray="3,3"/>
<line x1="718.5" y1="233" x2="718.5" y2="666" stroke="#6e6e6e" stroke-dasharray="3,3"/>
<line x1="750.5" y1="233" x2="750.5" y2="666" stroke="#6e6e6e" stroke-dasharray="3,3"/>
<line x1="781.5" y1="233" x2="781.5" y2="666" stroke="#6e6e6e" stroke-dasharray="3,3"/>
<line x1="812.5" y1="233" x2="812.5" y2="666" stroke="#6e6e6e" stroke-dasharray="3,3"/>
<line x1="844.5" y1="233" x2="844.5" y2="666" stroke="#6e6e6e" stroke-dasharray="3,3"/>
<line x1="875.5" y1="233" x2="875.5" y2="666" stroke="#6e6e6e" stroke-dasharray="3,3"/>
<line x1="906.5" y1="233" x2="906.5" y2="666" stroke="#6e6e6e" stroke-dasharray="3,3"/>
<line x1="938.5" y1="233" x2="938.5" y2="666" stroke="#6e6e6e" stroke-dasharray="3,3"/>
<line x1="969.5" y1="233" x2="969.5" y2="666" stroke="#6e6e6e" stroke-dasharray="3,3"/>
<line x1="1000.5" y1="233" x2="1000.5" y2="666" stroke="#6e6e6e" stroke-dasharray="3,3"/>
<line x1="1031.5" y1="233" x2="1031.5" y2="666" stroke="#6e6e6e" stroke-dasharray="3,3"/>
<line x1="1063.5" y1="233" x2="1063.5" y2="666" stroke="#6e6e6e" stroke-dasharray="3,3"/>
<line x1="1094.5" y1="233" x2="1094.5" y2="666" stroke="#6e6e6e" stroke-dasharray="3,3"/>
<line x1="1125.5" y1="233" x2="1125.5" y2="666" stroke="#6e6e6e" stroke-dasharray="3,3"/>
<line x1="1157.5" y1="233" x2="1157.5" y2="666" stroke="#6e6e6e" stroke-dasharray="3,3"/>
<line x1="1188.5" y1="233" x2="1188.5" y2="666" stroke="#6e6e6e" stroke-dasharray="3,3"/>
<line x1="1219.5" y1="233" x2="1219.5" y2="666" stroke="#6e6e6e" stroke-dasharray="3,3"/>
<rect x="186" y="231" width="1053" height="1" fill="#000"/>
<rect x="1238" y="231" width="1" height="437" fill="#000"/>
<rect x="186" y="666" width="1054" height="2" fill="#000"/>
<rect x="185" y="231" width="2" height="437" fill="#ff0000"/>
<rect x="182" y="667" width="3" height="1" fill="#ff0000"/>
<rect x="184" y="662" width="1" height="1" fill="#ff0000"/>
<rect x="184" y="657" width="1" height="1" fill="#ff0000"/>
<rect x="184" y="652" width="1" height="1" fill="#ff0000"/>
<rect x="182" y="648" width="3" height="1" fill="#ff0000"/>
<rect x="184" y="643" width="1" height="1" fill="#ff0000"/>
<rect x="184" y="638" width="1" height="1" fill="#ff0000"/>
<rect x="184" y="633" width="1" height="1" fill="#ff0000"/>
<rect x="182" y="628" width="3" height="1" fill="#ff0000"/>
<rect x="184" y="624" width="1" height="1" fill="#ff0000"/>
<rect x="184" y="619" width="1" height="1" fill="#ff0000"/>
<rect x="184" y="614" width="1" height="1" fill="#ff0000"/>
<rect x="182" y="609" width="3" height="1" fill="#ff0000"/>
<rect x="184" y="604" width="1" height="1" fill="#ff0000"/>
<rect x="184" y="600" width="1" height="1" fill="#ff0000"/>
<rect x="184" y="595" width="1" height="1" fill="#ff0000"/>
<rect x="182" y="590" width="3" height="1" fill="#ff0000"/>
<rect x="184" y="585" width="1" height="1" fill="#ff0000"/>
<rect x="184" y="580" width="1" height="1" fill="#ff0000"/>
<rect x="184" y="575" width="1" height="1" fill="#ff0000"/>
<rect x="182" y="571" width="3" height="1" fill="#ff0000"/>
<rect x="184" y="566" width="1" height="1" fill="#ff0000"/>
<rect x="184" y="561" width="1" height="1" fill="#ff0000"/>
<rect x="184" y="556" width="1" height="1" fill="#ff0000"/>
<rect x="182" y="551" width="3" height="1" fill="#ff0000"/>
<rect x="184" y="547" width="1" height="1" fill="#ff0000"/>
<rect x="184" y="542" width="1" height="1" fill="#ff0000"/>
<rect x="184" y="537" width="1" height="1" fill="#ff0000"/>
<rect x="182" y="532" width="3" height="1" fill="#ff0000"/>
<rect x="184" y="527" width="1" height="1" fill="#ff0000"/>
<rect x="184" y="523" width="1" height="1" fill="#ff0000"/>
<rect x="184" y="518" width="1" height="1" fill="#ff0000"/>
<rect x="182" y="513" width="3" height="1" fill="#ff0000"/>
<rect x="184" y="508" width="1" height="1" fill="#ff0000"/>
<rect x="184" y="503" width="1" height="1" fill="#ff0000"/>
<rect x="184" y="498" width="1" height="1" fill="#ff0000"/>
<rect x="182" y="494" width="3" height="1" fill="#ff0000"/>
<rect x="184" y="489" width="1" height="1" fill="#ff0000"/>
<rect x="184" y="484" width="1" height="1" fill="#ff0000"/>
<rect x="184" y="479" width="1" height="1" fill="#ff0000"/>
<rect x="182" y="474" width="3" height="1" fill="#ff0000"/>
<rect x="184" y="470" width="1" height="1" fill="#ff0000"/>
<rect x="184" y="465" width="1" height="1" fill="#ff0000"/>
<rect x="184" y="460" width="1" height="1" fill="#ff0000"/>
<rect x="182" y="455" width="3" height="1" fill="#ff0000"/>
<rect x="184" y="450" width="1" height="1" fill="#ff0000"/>
<rect x="184" y="446" width="1" height="1" fill="#ff0000"/>
<rect x="184" y="441" width="1" height="1" fill="#ff0000"/>
<rect x="182" y="436" width="3" height="1" fill="#ff0000"/>
<rect x="184" y="431" width="1" height="1" fill="#ff0000"/>
<rect x="184" y="426" width="1" height="1" fill="#ff0000"/>
<rect x="184" y="421" width="1" height="1" fill="#ff0000"/>
<rect x="182" y="417" width="3" height="1" fill="#ff0000"/>
<rect x="184" y="412" width="1" height="1" fill="#ff0000"/>
<rect x="184" y="407" width="1" height="1" fill="#ff0000"/>
<rect x="184" y="402" width="1" height="1" fill="#ff0000"/>
<rect x="182" y="397" width="3" height="1" fill="#ff0000"/>
<rect x="184" y="393" width="1" height="1" fill="#ff0000"/>
<rect x="184" y="388" width="1" height="1" fill="#ff0000"/>
<rect x="184" y="383" width="1" height="1" fill="#ff0000"/>
<rect x="182" y="378" width="3" height="1" fill="#ff0000"/>
<rect x="184" y="373" width="1" height="1" fill="#ff0000"/>
<rect x="184" y="369" width="1" height="1" fill="#ff0000"/>
<rect x="184" y="364" width="1" height="1" fill="#ff0000"/>
<rect x="182" y="359" width="3" height="1" fill="#ff0000"/>
<rect x="184" y="354" width="1" height="1" fill="#ff0000"/>
<rect x="184" y="349" width="1" height="1" fill="#ff0000"/>
<rect x="184" y="344" width="1" height="1" fill="#ff0000"/>
<rect x="182" y="340" width="3" height="1" fill="#ff0000"/>
<rect x="184" y="335" width="1" height="1" fill="#ff0000"/>
<rect x="184" y="330" width="1" height="1" fill="#ff0000"/>
<rect x="184" y="325" width="1" height="1" fill="#ff0000"/>
<rect x="182" y="320" width="3" height="1" fill="#ff0000"/>
<rect x="184" y="316" width="1" height="1" fill="#ff0000"/>
<rect x="184" y="311" width="1" height="1" fill="#ff0000"/>
<rect x="184" y="306" width="1" height="1" fill="#ff0000"/>
<rect x="182" y="301" width="3" height="1" fill="#ff0000"/>
<rect x="184" y="296" width="1" height="1" fill="#ff0000"/>
<rect x="184" y="292" width="1" height="1" fill="#ff0000"/>
<rect x="184" y="287" width="1" height="1" fill="#ff0000"/>
<rect x="182" y="282" width="3" height="1" fill="#ff0000"/>
<rect x="184" y="277" width="1" height="1" fill="#ff0000"/>
<rect x="184" y="272" width="1" height="1" fill="#ff0000"/>
<rect x="184" y="267" width="1" height="1" fill="#ff0000"/>
<rect x="182" y="263" width="3" height="1" fill="#ff0000"/>
<rect x="184" y="258" width="1" height="1" fill="#ff0000"/>
<rect x="184" y="253" width="1" height="1" fill="#ff0000"/>
<rect x="184" y="248" width="1" height="1" fill="#ff0000"/>
<rect x="182" y="243" width="3" height="1" fill="#ff0000"/>
<rect x="184" y="239" width="1" height="1" fill="#ff0000"/>
<rect x="184" y="234" width="1" height="1" fill="#ff0000"/>
<rect x="186" y="668" width="1" height="4" fill="#606060"/>
<rect x="194" y="668" width="1" height="2" fill="#606060"/>
<rect x="202" y="668" width="1" height="2" fill="#606060"/>
<rect x="210" y="668" width="1" height="2" fill="#606060"/>
<rect x="217" y="668" width="1" height="4" fill="#606060"/>
<rect x="225" y="668" width="1" height="2" fill="#606060"/>
<rect x="233" y="668" width="1" height="2" fill="#606060"/>
<rect x="241" y="668" width="1" height="2" fill="#606060"/>
<rect x="249" y="668" width="1" height="4" fill="#606060"/>
<rect x="257" y="668" width="1" height="2" fill="#606060"/>
<rect x="264" y="668" width="1" height="2" fill="#606060"/>
<rect x="272" y="668" width="1" height="2" fill="#606060"/>
<rect x="280" y="668" width="1" height="4" fill="#606060"/>
<rect x="288" y="668" width="1" height="2" fill="#606060"/>
<rect x="296" y="668" width="1" height="2" fill="#606060"/>
<rect x="304" y="668" width="1" height="2" fill="#606060"/>
<rect x="311" y="668" width="1" height="4" fill="#606060"/>
<rect x="319" y="668" width="1" height="2" fill="#606060"/>
<rect x="327" y="668" width="1" height="2" fill="#606060"/>
<rect x="335" y="668" width="1" height="2" fill="#606060"/>
<rect x="343" y="668" width="1" height="4" fill="#606060"/>
<rect x="350" y="668" width="1" height="2" fill="#606060"/>
<rect x="358" y="668" width="1" height="2" fill="#606060"/>
<rect x="366" y="668" width="1" height="2" fill="#606060"/>
<rect x="374" y="668" width="1" height="4" fill="#606060"/>
<rect x="382" y="668" width="1" height="2" fill="#606060"/>
<rect x="390" y="668" width="1" height="2" fill="#606060"/>
<rect x="397" y="668" width="1" height="2" fill="#606060"/>
<rect x="405" y="668" width="1" height="4" fill="#606060"/>
<rect x="413" y="668" width="1" height="2" fill="#606060"/>
<rect x="421" y="668" width="1" height="2" fill="#606060"/>
<rect x="429" y="668" width="1" height="2" fill="#606060"/>
<rect x="437" y="668" width="1" height="4" fill="#606060"/>
<rect x="444" y="668" width="1" height="2" fill="#606060"/>
<rect x="452" y="668" width="1" height="2" fill="#606060"/>
<rect x="460" y="668" width="1" height="2" fill="#606060"/>
<rect x="468" y="668" width="1" height="4" fill="#606060"/>
<rect x="476" y="668" width="1" height="2" fill="#606060"/>
<rect x="484" y="668" width="1" height="2" fill="#606060"/>
<rect x="491" y="668" width="1" height="2" fill="#606060"/>
<rect x="499" y="668" width="1" height="4" fill="#606060"/>
<rect x="507" y="668" width="1" height="2" fill="#606060"/>
<rect x="515" y="668" width="1" height="2" fill="#606060"/>
<rect x="523" y="668" width="1" height="2" fill="#606060"/>
<rect x="531" y="668" width="1" height="4" fill="#606060"/>
<rect x="538" y="668" width="1" height="2" fill="#606060"/>
<rect x="546" y="668" width="1" height="2" fill="#606060"/>
<rect x="554" y="668" width="1" height="2" fill="#606060"/>
<rect x="562" y="668" width="1" height="4" fill="#606060"/>
<rect x="570" y="668" width="1" height="2" fill="#606060"/>
<rect x="577" y="668" width="1" height="2" fill="#606060"/>
<rect x="585" y="668" width="1" height="2" fill="#606060"/>
<rect x="593" y="668" width="1" height="4" fill="#606060"/>
<rect x="601" y="668" width="1" height="2" fill="#606060"/>
<rect x="609" y="668" width="1" height="2" fill="#606060"/>
<rect x="617" y="668" width="1" height="2" fill="#606060"/>
<rect x="624" y="668" width="1" height="4" fill="#606060"/>
<rect x="632" y="668" width="1" height="2" fill="#606060"/>
<rect x="640" y="668" width="1" height="2" fill="#606060"/>
<rect x="648" y="668" width="1" height="2" fill="#606060"/>
<rect x="656" y="668" width="1" height="4" fill="#606060"/>
<rect x="664" y="668" width="1" height="2" fill="#606060"/>
<rect x="671" y="668" width="1" height="2" fill="#606060"/>
<rect x="679" y="668" width="1" height="2" fill="#606060"/>
<rect x="687" y="668" width="1" height="4" fill="#606060"/>
<rect x="695" y="668" width="1" height="2" fill="#606060"/>
<rect x="703" y="668" width="1" height="2" fill="#606060"/>
<rect x="711" y="668" width="1" height="2" fill="#606060"/>
<rect x="718" y="668" width="1" height="4" fill="#606060"/>
<rect x="726" y="668" width="1" height="2" fill="#606060"/>
<rect x="734" y="668" width="1" height="2" fill="#606060"/>
<rect x="742" y="668" width="1" height="2" fill="#606060"/>
<rect x="750" y="668" width="1" height="4" fill="#606060"/>
<rect x="758" y="668" width="1" height="2" fill="#606060"/>
<rect x="765" y="668" width="1" height="2" fill="#606060"/>
<rect x="773" y="668" width="1" height="2" fill="#606060"/>
<rect x="781" y="668" width="1" height="4" fill="#606060"/>
<rect x="789" y="668" width="1" height="2" fill="#606060"/>
<rect x="797" y="668" width="1" height="2" fill="#606060"/>
<rect x="804" y="668" width="1" height="2" fill="#606060"/>
<rect x="812" y="668" width="1" height="4" fill="#606060"/>
<rect x="820" y="668" width="1" height="2" fill="#606060"/>
<rect x="828" y="668" width="1" height="2" fill="#606060"/>
<rect x="836" y="668" width="1" height="2" fill="#606060"/>
<rect x="844" y="668" width="1" height="4" fill="#606060"/>
<rect x="851" y="668" width="1" height="2" fill="#606060"/>
<rect x="859" y="668" width="1" height="2" fill="#606060"/>
<rect x="867" y="668" width="1" height="2" fill="#606060"/>
<rect x="875" y="668" width="1" height="4" fill="#606060"/>
<rect x="883" y="668" width="1" height="2" fill="#606060"/>
<rect x="891" y="668" width="1" height="2" fill="#606060"/>
<rect x="898" y="668" width="1" height="2" fill="#606060"/>
<rect x="906" y="668" width="1" height="4" fill="#606060"/>
<rect x="914" y="668" width="1" height="2" fill="#606060"/>
<rect x="922" y="668" width="1" height="2" fill="#606060"/>
<rect x="930" y="668" width="1" height="2" fill="#606060"/>
<rect x="938" y="668" width="1" height="4" fill="#606060"/>
<rect x="945" y="668" width="1" height="2" fill="#606060"/>
<rect x="953" y="668" width="1" height="2" fill="#606060"/>
<rect x="961" y="668" width="1" height="2" fill="#606060"/>
<rect x="969" y="668" width="1" height="4" fill="#606060"/>
<rect x="977" y="668" width="1" height="2" fill="#606060"/>
<rect x="985" y="668" width="1" height="2" fill="#606060"/>
<rect x="992" y="668" width="1" height="2" fill="#606060"/>
<rect x="1000" y="668" width="1" height="4" fill="#606060"/>
<rect x="1008" y="668" width="1" height="2" fill="#606060"/>
<rect x="1016" y="668" width="1" height="2" fill="#606060"/>
<rect x="1024" y="668" width="1" height="2" fill="#606060"/>
<rect x="1031" y="668" width="1" height="4" fill="#606060"/>
<rect x="1039" y="668" width="1" height="2" fill="#606060"/>
<rect x="1047" y="668" width="1" height="2" fill="#606060"/>
<rect x="1055" y="668" width="1" height="2" fill="#606060"/>
<rect x="1063" y="668" width="1" height="4" fill="#606060"/>
<rect x="1071" y="668" width="1" height="2" fill="#606060"/>
<rect x="1078" y="668" width="1" height="2" fill="#606060"/>
<rect x="1086" y="668" width="1" height="2" fill="#606060"/>
<rect x="1094" y="668" width="1" height="4" fill="#606060"/>
<rect x="1102" y="668" width="1" height="2" fill="#606060"/>
<rect x="1110" y="668" width="1" height="2" fill="#606060"/>
<rect x="1118" y="668" width="1" height="2" fill="#606060"/>
<rect x="1125" y="668" width="1" height="4" fill="#606060"/>
<rect x="1133" y="668" width="1" height="2" fill="#606060"/>
<rect x="1141" y="668" width="1" height="2" fill="#606060"/>
<rect x="1149" y="668" width="1" height="2" fill="#606060"/>
<rect x="1157" y="668" width="1" height="4" fill="#606060"/>
<rect x="1165" y="668" width="1" height="2" fill="#606060"/>
<rect x="1172" y="668" width="1" height="2" fill="#606060"/>
<rect x="1180" y="668" width="1" height="2" fill="#606060"/>
<rect x="1188" y="668" width="1" height="4" fill="#606060"/>
<rect x="1196" y="668" width="1" height="2" fill="#606060"/>
<rect x="1204" y="668" width="1" height="2" fill="#606060"/>
<rect x="1212" y="668" width="1" height="2" fill="#606060"/>
<rect x="1219" y="668" width="1" height="4" fill="#606060"/>
<rect x="1227" y="668" width="1" height="2" fill="#606060"/>
<rect x="1235" y="668" width="1" height="2" fill="#606060"/>
<rect x="101" y="231" width="2" height="437" fill="#505050"/>
<rect x="98" y="660" width="3" height="1" fill="#505050"/>
<rect x="100" y="653" width="1" height="1" fill="#505050"/>
<rect x="100" y="645" width="1" height="1" fill="#505050"/>
<rect x="100" y="637" width="1" height="1" fill="#505050"/>
<rect x="98" y="630" width="3" height="1" fill="#505050"/>
<rect x="100" y="622" width="1" height="1" fill="#505050"/>
<rect x="100" y="615" width="1" height="1" fill="#505050"/>
<rect x="100" y="607" width="1" height="1" fill="#505050"/>
<rect x="98" y="599" width="3" height="1" fill="#505050"/>
<rect x="100" y="592" width="1" height="1" fill="#505050"/>
<rect x="100" y="584" width="1" height="1" fill="#505050"/>
<rect x="100" y="576" width="1" height="1" fill="#505050"/>
<rect x="98" y="569" width="3" height="1" fill="#505050"/>
<rect x="100" y="561" width="1" height="1" fill="#505050"/>
<rect x="100" y="553" width="1" height="1" fill="#505050"/>
<rect x="100" y="546" width="1" height="1" fill="#505050"/>
<rect x="98" y="538" width="3" height="1" fill="#505050"/>
<rect x="100" y="530" width="1" height="1" fill="#505050"/>
<rect x="100" y="523" width="1" height="1" fill="#505050"/>
<rect x="100" y="515" width="1" height="1" fill="#505050"/>
<rect x="98" y="508" width="3" height="1" fill="#505050"/>
<rect x="100" y="500" width="1" height="1" fill="#505050"/>
<rect x="100" y="492" width="1" height="1" fill="#505050"/>
<rect x="100" y="485" width="1" height="1" fill="#505050"/>
<rect x="98" y="477" width="3" height="1" fill="#505050"/>
<rect x="100" y="469" width="1" height="1" fill="#505050"/>
<rect x="100" y="462" width="1" height="1" fill="#505050"/>
<rect x="100" y="454" width="1" height="1" fill="#505050"/>
<rect x="98" y="446" width="3" height="1" fill="#505050"/>
<rect x="100" y="439" width="1" height="1" fill="#505050"/>
<rect x="100" y="431" width="1" height="1" fill="#505050"/>
<rect x="100" y="423" width="1" height="1" fill="#505050"/>
<rect x="98" y="416" width="3" height="1" fill="#505050"/>
<rect x="100" y="408" width="1" height="1" fill="#505050"/>
<rect x="100" y="400" width="1" height="1" fill="#505050"/>
<rect x="100" y="393" width="1" height="1" fill="#505050"/>
<rect x="98" y="385" width="3" height="1" fill="#505050"/>
<rect x="100" y="378" width="1" height="1" fill="#505050"/>
<rect x="100" y="370" width="1" height="1" fill="#505050"/>
<rect x="100" y="362" width="1" height="1" fill="#505050"/>
<rect x="98" y="355" width="3" height="1" fill="#505050"/>
<rect x="100" y="347" width="1" height="1" fill="#505050"/>
<rect x="100" y="339" width="1" height="1" fill="#505050"/>
<rect x="100" y="332" width="1" height="1" fill="#505050"/>
<rect x="98" y="324" width="3" height="1" fill="#505050"/>
<rect x="100" y="316" width="1" height="1" fill="#505050"/>
<rect x="100" y="309" width="1" height="1" fill="#505050"/>
<rect x="100" y="301" width="1" height="1" fill="#505050"/>
<rect x="98" y="293" width="3" height="1" fill="#505050"/>
<rect x="100" y="286" width="1" height="1" fill="#505050"/>
<rect x="100" y="278" width="1" height="1" fill="#505050"/>
<rect x="100" y="271" width="1" height="1" fill="#505050"/>
<rect x="98" y="263" width="3" height="1" fill="#505050"/>
<rect x="100" y="255" width="1" height="1" fill="#505050"/>
<rect x="100" y="248" width="1" height="1" fill="#505050"/>
<rect x="100" y="240" width="1" height="1" fill="#505050"/>
<rect x="98" y="232" width="3" height="1" fill="#505050"/>
<path d="M186.4,446.8 C188.3,447.9 192.3,449.5 197.6,453.3 C202.9,457.1 209.4,463.1 218.0,469.4 C226.6,475.6 239.6,484.2 248.9,490.8 C258.2,497.4 263.6,499.4 273.8,509.0 C284.1,518.6 298.7,536.5 310.4,548.5 C322.1,560.5 331.5,570.0 344.0,580.8 C356.5,591.5 374.9,605.7 385.2,613.0 C395.5,620.3 399.1,621.0 405.7,624.7 C412.3,628.4 419.1,631.2 424.7,635.0 C430.3,638.8 435.3,644.0 439.4,647.3 C443.5,650.6 443.3,651.7 449.5,654.8 C455.7,657.9 465.7,663.9 476.8,665.7 C487.9,667.5 505.5,666.9 515.9,665.7 C526.3,664.5 531.5,662.8 539.3,658.7 C547.1,654.6 553.6,649.2 562.7,641.1 C571.8,633.0 583.6,620.7 594.0,610.0 C604.4,599.3 614.8,590.1 625.2,576.7 C635.6,563.4 646.0,546.8 656.4,529.9 C666.8,513.0 680.8,486.8 687.7,475.2 C694.6,463.6 692.5,468.1 698.0,460.4 C703.5,452.7 711.8,439.5 720.4,429.0 C729.0,418.5 740.0,409.5 749.7,397.5 C759.5,385.5 768.8,367.9 778.9,357.0 C789.0,346.1 800.6,343.2 810.3,332.4 C820.0,321.5 828.3,303.1 837.3,291.9 C846.3,280.6 857.5,270.9 864.3,264.9 C871.0,258.9 872.6,259.4 877.8,256.0 C883.0,252.6 890.1,248.4 895.7,244.7 C901.3,240.9 904.0,235.8 911.5,233.5 C919.0,231.2 931.9,231.2 940.7,231.2 C949.6,231.2 959.4,232.6 964.6,233.4 C969.8,234.2 968.3,235.1 972.0,235.9 C975.7,236.7 981.7,236.9 986.6,238.3 C991.5,239.7 996.0,242.0 1001.3,244.4 C1006.6,246.8 1012.6,249.7 1018.3,253.0 C1024.0,256.3 1030.9,260.6 1035.4,264.0 C1039.9,267.4 1041.1,270.1 1045.2,273.7 C1049.3,277.3 1054.9,281.0 1059.8,285.9 C1064.7,290.8 1068.8,296.5 1074.5,303.0 C1080.2,309.5 1085.5,314.8 1094.0,325.0 C1102.5,335.2 1117.2,353.8 1125.8,364.0 C1134.3,374.2 1139.6,380.3 1145.3,386.0 C1151.0,391.7 1156.5,395.1 1160.0,398.2 C1163.5,401.2 1164.0,404.5 1166.0,404.3 C1168.0,404.1 1169.4,399.0 1172.1,397.0 C1174.8,395.0 1177.4,391.3 1181.9,392.1 C1186.4,392.9 1194.1,398.4 1199.0,401.9 C1203.9,405.3 1205.5,406.5 1211.2,412.8 C1216.9,419.1 1228.7,435.1 1233.2,439.7 C1237.7,444.3 1237.2,440.3 1238.0,440.4" fill="none" stroke="#484848" stroke-width="1" shape-rendering="auto"/>
<path d="M185.9,492.8 C188.1,491.3 193.9,488.1 199.0,484.0 C204.1,479.9 208.0,474.3 216.6,468.0 C225.2,461.7 241.2,451.9 250.3,446.0 C259.4,440.1 265.8,436.0 270.9,432.8 C276.0,429.6 276.1,429.6 281.0,427.0 C285.9,424.4 295.1,419.0 300.0,417.5 C304.9,416.0 306.9,418.5 310.4,418.0 C313.8,417.5 315.1,417.0 320.7,414.6 C326.3,412.2 336.2,407.3 344.0,403.4 C351.8,399.5 359.5,394.9 367.6,391.0 C375.7,387.1 382.1,384.7 392.5,380.0 C402.9,375.3 417.2,367.8 430.0,362.8 C442.8,357.9 457.3,354.0 469.0,350.3 C480.7,346.6 489.2,343.6 500.3,340.5 C511.4,337.4 527.6,332.6 535.4,331.5 C543.2,330.4 542.5,334.0 547.1,333.9 C551.7,333.8 554.9,332.8 562.7,330.8 C570.5,328.9 585.5,324.8 594.0,322.2 C602.5,319.6 603.1,317.6 613.5,315.1 C623.9,312.6 644.0,309.8 656.4,307.3 C668.8,304.8 680.8,302.0 687.7,300.3 C694.6,298.6 688.0,299.1 698.0,297.3 C708.0,295.5 733.2,291.9 747.4,289.7 C761.6,287.5 772.9,286.0 783.4,284.3 C793.9,282.6 802.8,279.9 810.3,279.3 C817.8,278.8 823.0,281.1 828.3,281.0 C833.5,280.9 835.0,279.6 841.8,278.6 C848.5,277.6 858.3,276.7 868.8,274.8 C879.3,272.9 892.7,269.2 904.7,267.2 C916.7,265.2 931.5,263.8 940.7,262.7 C949.9,261.6 951.1,261.8 960.0,260.4 C968.9,259.0 978.5,256.2 993.9,254.2 C1009.3,252.1 1031.8,250.3 1052.5,248.1 C1073.2,245.8 1106.6,242.2 1118.4,240.7 C1130.2,239.2 1114.8,239.9 1123.3,239.0 C1131.8,238.1 1155.5,236.3 1169.7,235.1 C1183.9,233.8 1200.6,231.8 1208.7,231.5 C1216.8,231.2 1213.6,232.4 1218.5,233.4 C1223.4,234.4 1234.8,236.9 1238.0,237.6" fill="none" stroke="#ff0000" stroke-width="1.05" shape-rendering="auto"/>
</svg>
<div class="gl r" style="top:659.9px;left:130px;width:48px;color:#ff0000">0</div>
<div class="gl r" style="top:640.6px;left:130px;width:48px;color:#ff0000">10</div>
<div class="gl r" style="top:621.4px;left:130px;width:48px;color:#ff0000">20</div>
<div class="gl r" style="top:602.1px;left:130px;width:48px;color:#ff0000">30</div>
<div class="gl r" style="top:582.9px;left:130px;width:48px;color:#ff0000">40</div>
<div class="gl r" style="top:563.6px;left:130px;width:48px;color:#ff0000">50</div>
<div class="gl r" style="top:544.4px;left:130px;width:48px;color:#ff0000">60</div>
<div class="gl r" style="top:525.1px;left:130px;width:48px;color:#ff0000">70</div>
<div class="gl r" style="top:505.9px;left:130px;width:48px;color:#ff0000">80</div>
<div class="gl r" style="top:486.6px;left:130px;width:48px;color:#ff0000">90</div>
<div class="gl r" style="top:467.4px;left:130px;width:48px;color:#ff0000">100</div>
<div class="gl r" style="top:448.1px;left:130px;width:48px;color:#ff0000">110</div>
<div class="gl r" style="top:428.9px;left:130px;width:48px;color:#ff0000">120</div>
<div class="gl r" style="top:409.6px;left:130px;width:48px;color:#ff0000">130</div>
<div class="gl r" style="top:390.4px;left:130px;width:48px;color:#ff0000">140</div>
<div class="gl r" style="top:371.1px;left:130px;width:48px;color:#ff0000">150</div>
<div class="gl r" style="top:351.9px;left:130px;width:48px;color:#ff0000">160</div>
<div class="gl r" style="top:332.6px;left:130px;width:48px;color:#ff0000">170</div>
<div class="gl r" style="top:313.4px;left:130px;width:48px;color:#ff0000">180</div>
<div class="gl r" style="top:294.1px;left:130px;width:48px;color:#ff0000">190</div>
<div class="gl r" style="top:274.9px;left:130px;width:48px;color:#ff0000">200</div>
<div class="gl r" style="top:255.6px;left:130px;width:48px;color:#ff0000">210</div>
<div class="gl r" style="top:236.4px;left:130px;width:48px;color:#ff0000">220</div>
<div class="gl c" style="top:674px;left:166.1px;width:40px">0</div>
<div class="gl c" style="top:674px;left:197.4px;width:40px">1</div>
<div class="gl c" style="top:674px;left:228.7px;width:40px">2</div>
<div class="gl c" style="top:674px;left:260.0px;width:40px">3</div>
<div class="gl c" style="top:674px;left:291.3px;width:40px">4</div>
<div class="gl c" style="top:674px;left:322.6px;width:40px">5</div>
<div class="gl c" style="top:674px;left:354.0px;width:40px">6</div>
<div class="gl c" style="top:674px;left:385.3px;width:40px">7</div>
<div class="gl c" style="top:674px;left:416.6px;width:40px">8</div>
<div class="gl c" style="top:674px;left:447.9px;width:40px">9</div>
<div class="gl c" style="top:674px;left:479.2px;width:40px">10</div>
<div class="gl c" style="top:674px;left:510.5px;width:40px">11</div>
<div class="gl c" style="top:674px;left:541.8px;width:40px">12</div>
<div class="gl c" style="top:674px;left:573.1px;width:40px">13</div>
<div class="gl c" style="top:674px;left:604.4px;width:40px">14</div>
<div class="gl c" style="top:674px;left:635.8px;width:40px">15</div>
<div class="gl c" style="top:674px;left:667.1px;width:40px">16</div>
<div class="gl c" style="top:674px;left:698.4px;width:40px">17</div>
<div class="gl c" style="top:674px;left:729.7px;width:40px">18</div>
<div class="gl c" style="top:674px;left:761.0px;width:40px">19</div>
<div class="gl c" style="top:674px;left:792.3px;width:40px">20</div>
<div class="gl c" style="top:674px;left:823.6px;width:40px">21</div>
<div class="gl c" style="top:674px;left:854.9px;width:40px">22</div>
<div class="gl c" style="top:674px;left:886.2px;width:40px">23</div>
<div class="gl c" style="top:674px;left:917.5px;width:40px">24</div>
<div class="gl c" style="top:674px;left:948.9px;width:40px">25</div>
<div class="gl c" style="top:674px;left:980.2px;width:40px">26</div>
<div class="gl c" style="top:674px;left:1011.5px;width:40px">27</div>
<div class="gl c" style="top:674px;left:1042.8px;width:40px">28</div>
<div class="gl c" style="top:674px;left:1074.1px;width:40px">29</div>
<div class="gl c" style="top:674px;left:1105.4px;width:40px">30</div>
<div class="gl c" style="top:674px;left:1136.7px;width:40px">31</div>
<div class="gl c" style="top:674px;left:1168.0px;width:40px">32</div>
<div class="gl c" style="top:674px;left:1199.3px;width:40px">33</div>
<div class="gl r" style="top:653.4px;left:40px;width:55px;color:#505050">108.5</div>
<div class="gl r" style="top:622.8px;left:40px;width:55px;color:#505050">109</div>
<div class="gl r" style="top:592.2px;left:40px;width:55px;color:#505050">109.5</div>
<div class="gl r" style="top:561.7px;left:40px;width:55px;color:#505050">110</div>
<div class="gl r" style="top:531.1px;left:40px;width:55px;color:#505050">110.5</div>
<div class="gl r" style="top:500.5px;left:40px;width:55px;color:#505050">111</div>
<div class="gl r" style="top:469.9px;left:40px;width:55px;color:#505050">111.5</div>
<div class="gl r" style="top:439.3px;left:40px;width:55px;color:#505050">112</div>
<div class="gl r" style="top:408.8px;left:40px;width:55px;color:#505050">112.5</div>
<div class="gl r" style="top:378.2px;left:40px;width:55px;color:#505050">113</div>
<div class="gl r" style="top:347.6px;left:40px;width:55px;color:#505050">113.5</div>
<div class="gl r" style="top:317.0px;left:40px;width:55px;color:#505050">114</div>
<div class="gl r" style="top:286.4px;left:40px;width:55px;color:#505050">114.5</div>
<div class="gl r" style="top:255.9px;left:40px;width:55px;color:#505050">115</div>
<div class="gl r" style="top:225.3px;left:40px;width:55px;color:#505050">115.5</div>
<div class="gl c" style="top:688px;left:661px;width:100px">Sekunde</div>
<div class="gl c" style="top:443px;left:9px;width:100px;color:#505050;transform:rotate(-90deg)">H&ouml;he (meter)</div>
<div class="gl c" style="top:443px;left:101px;width:100px;color:#ff0000;transform:rotate(-90deg)">km/h</div>
<div class="a" style="left:0;top:716px;width:1280px;height:5px;background:linear-gradient(#6C80DC 0,#6A7CDA 70%,#4C5AC8 100%)"></div>
<div class="ph" style="left:4px;top:721px;width:1003px;height:22px;line-height:22px">Graph : Daten</div>
<div class="pc" style="left:993px;top:728px"></div>
<div class="a" style="left:1007px;top:721px;width:8px;height:303px;background:linear-gradient(90deg,#6E7FDB,#5868D0 50%,#6E7FDB)"></div>
<div class="ph" style="left:1015px;top:721px;width:261px;height:22px;line-height:22px">Graph : Karte</div>
<div class="pc" style="left:1262px;top:728px"></div>
<div class="a" style="left:4px;top:743px;width:1003px;height:276px;background:#fff;border:1px solid #fff;border-right:1px solid #ACA899;border-bottom:1px solid #ACA899"></div>
<div class="a" style="left:5px;top:744px;width:1001px;height:274px;border:1px solid #808080;border-right-color:#fff;border-bottom-color:#fff"></div>
<div class="a" style="left:6px;top:746px;width:984px;height:20px;background:#C0C0C0;border-bottom:1px solid #606060"></div>
<div class="a" style="left:6px;top:786px;width:984px;height:1px;background:#808080"></div>
<div class="a" style="left:6px;top:807px;width:984px;height:1px;background:#808080"></div>
<div class="a" style="left:6px;top:828px;width:984px;height:1px;background:#808080"></div>
<div class="a" style="left:6px;top:849px;width:984px;height:1px;background:#808080"></div>
<div class="a" style="left:989px;top:746px;width:1px;height:104px;background:#404040"></div>
<div class="a" style="left:24px;top:807px;width:1px;height:42px;background:#808080"></div>
<div class="tl a" style="left:8px;top:770px">Laufzeit</div>
<div class="tl a" style="left:8px;top:791px;color:#800000">Cursor (Sekunde)</div>
<div class="tl a" style="left:28px;top:812px;color:#ff0000">Geschwindigkeit (km/h)</div>
<div class="tl a" style="left:28px;top:833px;color:#606060">H&ouml;he (meter)</div>
<div class="a" style="left:7px;top:809px;width:14px;height:14px;border:2px solid #7C7C6C;border-right:1px solid #F0F0E8;border-bottom:1px solid #F0F0E8;background:#FAFAF6"><svg width="12" height="12" style="position:absolute;left:0;top:0"><path d="M2.5 4.5 L4.5 7 L8.5 2" stroke="#000" stroke-width="2.2" fill="none"/></svg></div>
<div class="a" style="left:7px;top:830px;width:14px;height:14px;border:2px solid #7C7C6C;border-right:1px solid #F0F0E8;border-bottom:1px solid #F0F0E8;background:#FAFAF6"><svg width="12" height="12" style="position:absolute;left:0;top:0"><path d="M2.5 4.5 L4.5 7 L8.5 2" stroke="#000" stroke-width="2.2" fill="none"/></svg></div>
<div class="a" style="left:1015px;top:743px;width:261px;height:242px;background:#fff"></div>
<div class="a" style="left:1007px;top:985px;width:273px;height:5px;background:#6070D4"></div>
<div class="a" style="left:1276px;top:990px;width:4px;height:34px;background:#ECE9D8"></div>
<div class="a" style="left:1015px;top:990px;width:265px;height:8px;background:#B4CAD8"></div>
<div class="a" style="left:1015px;top:998px;width:265px;height:2px;background:#F8F4EC;border-bottom:1px solid #C8C4B4"></div>
<div class="a" style="left:1015px;top:1001px;width:265px;height:23px;background:#ECE9D8"></div>
<div class="a" style="left:1156px;top:985px;width:40px;height:39px;border:1px solid #404868;background:#D8DCF0"><div class="a" style="left:3px;top:4px;width:32px;height:32px;background:linear-gradient(#7EA6DA,#5888CC);border:1px solid #4A7AC8"><svg width="30" height="30" style="position:absolute;left:0;top:0"><path d="M11 4 H19 V14 H25 L15 24 L5 14 H11Z" fill="#C8D8F0" opacity=".8"/></svg></div></div>
<div class="a" style="left:0;top:1018px;width:1007px;height:6px;background:#6E7FDB"></div>
<svg width="1280" height="1024" style="position:absolute;left:0;top:0" shape-rendering="crispEdges">
<line x1="1114.5" y1="754" x2="1114.5" y2="954" stroke="#6e6e6e" stroke-dasharray="3,3"/>
<line x1="1175.5" y1="754" x2="1175.5" y2="954" stroke="#6e6e6e" stroke-dasharray="3,3"/>
<line x1="1236.5" y1="754" x2="1236.5" y2="954" stroke="#6e6e6e" stroke-dasharray="3,3"/>
<line x1="1064" y1="772.5" x2="1268" y2="772.5" stroke="#6e6e6e" stroke-dasharray="3,3"/>
<line x1="1064" y1="796.5" x2="1268" y2="796.5" stroke="#6e6e6e" stroke-dasharray="3,3"/>
<line x1="1064" y1="820.5" x2="1268" y2="820.5" stroke="#6e6e6e" stroke-dasharray="3,3"/>
<line x1="1064" y1="844.5" x2="1268" y2="844.5" stroke="#6e6e6e" stroke-dasharray="3,3"/>
<line x1="1064" y1="868.5" x2="1268" y2="868.5" stroke="#6e6e6e" stroke-dasharray="3,3"/>
<line x1="1064" y1="892.5" x2="1268" y2="892.5" stroke="#6e6e6e" stroke-dasharray="3,3"/>
<line x1="1064" y1="916.5" x2="1268" y2="916.5" stroke="#6e6e6e" stroke-dasharray="3,3"/>
<line x1="1064" y1="941.5" x2="1268" y2="941.5" stroke="#6e6e6e" stroke-dasharray="3,3"/>
<rect x="1063" y="753" width="205" height="1" fill="#000"/>
<rect x="1063" y="753" width="2" height="203" fill="#000"/>
<rect x="1267" y="753" width="1" height="203" fill="#000"/>
<rect x="1063" y="954" width="206" height="2" fill="#000"/>
<rect x="1068" y="956" width="1" height="2" fill="#606060"/>
<rect x="1084" y="956" width="1" height="2" fill="#606060"/>
<rect x="1099" y="956" width="1" height="2" fill="#606060"/>
<rect x="1114" y="956" width="1" height="3" fill="#606060"/>
<rect x="1129" y="956" width="1" height="2" fill="#606060"/>
<rect x="1145" y="956" width="1" height="2" fill="#606060"/>
<rect x="1160" y="956" width="1" height="2" fill="#606060"/>
<rect x="1175" y="956" width="1" height="3" fill="#606060"/>
<rect x="1190" y="956" width="1" height="2" fill="#606060"/>
<rect x="1206" y="956" width="1" height="2" fill="#606060"/>
<rect x="1221" y="956" width="1" height="2" fill="#606060"/>
<rect x="1236" y="956" width="1" height="3" fill="#606060"/>
<rect x="1251" y="956" width="1" height="2" fill="#606060"/>
<rect x="1267" y="956" width="1" height="2" fill="#606060"/>
<rect x="1062" y="754" width="1" height="1" fill="#606060"/>
<rect x="1062" y="760" width="1" height="1" fill="#606060"/>
<rect x="1062" y="766" width="1" height="1" fill="#606060"/>
<rect x="1060" y="772" width="3" height="1" fill="#606060"/>
<rect x="1062" y="778" width="1" height="1" fill="#606060"/>
<rect x="1062" y="784" width="1" height="1" fill="#606060"/>
<rect x="1062" y="790" width="1" height="1" fill="#606060"/>
<rect x="1060" y="796" width="3" height="1" fill="#606060"/>
<rect x="1062" y="802" width="1" height="1" fill="#606060"/>
<rect x="1062" y="808" width="1" height="1" fill="#606060"/>
<rect x="1062" y="814" width="1" height="1" fill="#606060"/>
<rect x="1060" y="820" width="3" height="1" fill="#606060"/>
<rect x="1062" y="826" width="1" height="1" fill="#606060"/>
<rect x="1062" y="832" width="1" height="1" fill="#606060"/>
<rect x="1062" y="838" width="1" height="1" fill="#606060"/>
<rect x="1060" y="844" width="3" height="1" fill="#606060"/>
<rect x="1062" y="850" width="1" height="1" fill="#606060"/>
<rect x="1062" y="856" width="1" height="1" fill="#606060"/>
<rect x="1062" y="862" width="1" height="1" fill="#606060"/>
<rect x="1060" y="868" width="3" height="1" fill="#606060"/>
<rect x="1062" y="874" width="1" height="1" fill="#606060"/>
<rect x="1062" y="880" width="1" height="1" fill="#606060"/>
<rect x="1062" y="886" width="1" height="1" fill="#606060"/>
<rect x="1060" y="892" width="3" height="1" fill="#606060"/>
<rect x="1062" y="898" width="1" height="1" fill="#606060"/>
<rect x="1062" y="904" width="1" height="1" fill="#606060"/>
<rect x="1062" y="910" width="1" height="1" fill="#606060"/>
<rect x="1060" y="916" width="3" height="1" fill="#606060"/>
<rect x="1062" y="923" width="1" height="1" fill="#606060"/>
<rect x="1062" y="929" width="1" height="1" fill="#606060"/>
<rect x="1062" y="935" width="1" height="1" fill="#606060"/>
<rect x="1060" y="941" width="3" height="1" fill="#606060"/>
<rect x="1062" y="947" width="1" height="1" fill="#606060"/>
<path d="M1178.6,754.0 C1179.1,760.5 1180.9,781.8 1181.4,792.8 C1181.9,803.8 1181.9,811.1 1181.4,820.3 C1180.9,829.5 1179.6,838.6 1178.6,847.8 C1177.6,857.0 1176.6,866.7 1175.2,875.3 C1173.8,883.9 1172.3,891.4 1170.0,899.4 C1167.7,907.4 1164.4,914.2 1161.4,923.4 C1158.4,932.6 1153.6,949.2 1152.1,954.4" fill="none" stroke="#ff0000" stroke-width="1.2" shape-rendering="auto"/>
<path d="M1164,867 L1186,887 M1164,887 L1186,867" stroke="#ff0000" stroke-width="1" shape-rendering="auto"/>
</svg>
<div class="gl r" style="top:765.2px;left:1000px;width:57px;color:#000">-5,400</div>
<div class="gl r" style="top:789.2px;left:1000px;width:57px;color:#000">-5,600</div>
<div class="gl r" style="top:813.3px;left:1000px;width:57px;color:#000">-5,800</div>
<div class="gl r" style="top:837.4px;left:1000px;width:57px;color:#000">-6,000</div>
<div class="gl r" style="top:861.4px;left:1000px;width:57px;color:#000">-6,200</div>
<div class="gl r" style="top:885.5px;left:1000px;width:57px;color:#000">-6,400</div>
<div class="gl r" style="top:909.5px;left:1000px;width:57px;color:#000">-6,600</div>
<div class="gl r" style="top:933.6px;left:1000px;width:57px;color:#000">-6,800</div>
<div class="gl c" style="top:962px;left:1089.2px;width:50px">500</div>
<div class="gl c" style="top:962px;left:1150.2px;width:50px">1,000</div>
<div class="gl c" style="top:962px;left:1211.2px;width:50px">1,500</div>
<div class="a" style="left:214px;top:701px;width:640px;height:323px;background:#0A50E0;border-radius:6px 6px 0 0"></div>
<div class="a" style="left:214px;top:701px;width:640px;height:22px;border-radius:2px 2px 0 0;background:linear-gradient(#3D8EF8 0,#0B62EE 12%,#0558E6 50%,#0A5EEA 80%,#0850D8 100%)"></div>
<div class="a" style="left:218px;top:707px;font-size:12px;line-height:15px;font-weight:bold;color:#fff;text-shadow:1px 1px #0A2C8C">Report-Generator - Accel Test</div>
<div class="a" style="left:835px;top:706px;width:14px;height:14px;border-radius:2px;background:linear-gradient(#E8785A,#D04A28);border:1px solid #fff"><svg width="12" height="12" style="position:absolute;left:0;top:0"><path d="M3 3 L9 9 M9 3 L3 9" stroke="#fff" stroke-width="2"/></svg></div>
<div class="a" style="left:218px;top:723px;width:632px;height:301px;background:#fff;border:1px solid #808080"></div>
<div class="a" style="left:219px;top:724px;width:610px;height:50px;background:#ECE9D8"></div>
<div class="a c" style="left:219px;top:745px;width:72px;font-size:10.4px;line-height:14px;white-space:nowrap;overflow:hidden">Runde Nr.</div>
<div class="a c" style="left:291px;top:745px;width:121px;font-size:10.4px;line-height:14px;white-space:nowrap;overflow:hidden">Geschwindigkeit(km/h)</div>
<div class="a c" style="left:412px;top:745px;width:72px;font-size:10.4px;line-height:14px;white-space:nowrap;overflow:hidden">Zeit(en)</div>
<div class="a c" style="left:484px;top:745px;width:72px;font-size:10.4px;line-height:14px;white-space:nowrap;overflow:hidden">Entf.(m)</div>
<div class="a c" style="left:556px;top:745px;width:123px;font-size:10.4px;line-height:14px;white-space:nowrap;overflow:hidden">Runde als Einzel-Graph</div>
<div class="a c" style="left:679px;top:745px;width:77px;font-size:10.4px;line-height:14px;white-space:nowrap;overflow:hidden">Beschreibung</div>
<div class="a c" style="left:756px;top:745px;width:73px;font-size:10.4px;line-height:14px;white-space:nowrap;overflow:hidden"></div>
<div class="a" style="left:291px;top:724px;width:1px;height:300px;background:#808080"></div>
<div class="a" style="left:412px;top:724px;width:1px;height:300px;background:#808080"></div>
<div class="a" style="left:484px;top:724px;width:1px;height:300px;background:#808080"></div>
<div class="a" style="left:556px;top:724px;width:1px;height:300px;background:#808080"></div>
<div class="a" style="left:679px;top:724px;width:1px;height:300px;background:#808080"></div>
<div class="a" style="left:756px;top:724px;width:1px;height:300px;background:#808080"></div>
<div class="a" style="left:829px;top:724px;width:1px;height:300px;background:#808080"></div>
<div class="a" style="left:219px;top:774px;width:611px;height:1px;background:#808080"></div>
<div class="a" style="left:219px;top:794px;width:611px;height:1px;background:#808080"></div>
<div class="cell" style="left:220px;top:776px;width:71px;letter-spacing:0.2px">1</div>
<div class="cell" style="left:292px;top:776px;width:120px;letter-spacing:0.2px">100.00</div>
<div class="cell" style="left:413px;top:776px;width:71px;letter-spacing:0.2px">0</div>
<div class="cell" style="left:485px;top:776px;width:71px;letter-spacing:0.2px">0.00</div>
<div class="cell" style="left:683px;top:776px;width:73px;padding:0;text-align:left;font-size:10.5px">indigkeitsstart</div>
<div class="a" style="left:219px;top:814px;width:611px;height:1px;background:#808080"></div>
<div class="cell" style="left:220px;top:796px;width:71px;letter-spacing:0.2px">1</div>
<div class="cell" style="left:292px;top:796px;width:120px;letter-spacing:0.2px">110.00</div>
<div class="cell" style="left:413px;top:796px;width:71px;letter-spacing:0.2px">0.84</div>
<div class="cell" style="left:485px;top:796px;width:71px;letter-spacing:0.2px">24.57</div>
<div class="cell" style="left:683px;top:796px;width:73px;padding:0;text-align:left;font-size:10.5px">windigkeitslinie</div>
<div class="a" style="left:219px;top:834px;width:611px;height:1px;background:#808080"></div>
<div class="cell" style="left:220px;top:816px;width:71px;letter-spacing:0.2px">1</div>
<div class="cell" style="left:292px;top:816px;width:120px;letter-spacing:0.2px">120.00</div>
<div class="cell" style="left:413px;top:816px;width:71px;letter-spacing:0.2px">1.80</div>
<div class="cell" style="left:485px;top:816px;width:71px;letter-spacing:0.2px">55.13</div>
<div class="cell" style="left:683px;top:816px;width:73px;padding:0;text-align:left;font-size:10.5px">windigkeitslinie</div>
<div class="a" style="left:219px;top:854px;width:611px;height:1px;background:#808080"></div>
<div class="cell" style="left:220px;top:836px;width:71px;letter-spacing:0.2px">1</div>
<div class="cell" style="left:292px;top:836px;width:120px;letter-spacing:0.2px">130.00</div>
<div class="cell" style="left:413px;top:836px;width:71px;letter-spacing:0.2px">3.33</div>
<div class="cell" style="left:485px;top:836px;width:71px;letter-spacing:0.2px">108.76</div>
<div class="cell" style="left:683px;top:836px;width:73px;padding:0;text-align:left;font-size:10.5px">windigkeitslinie</div>
<div class="a" style="left:219px;top:874px;width:611px;height:1px;background:#808080"></div>
<div class="cell" style="left:220px;top:856px;width:71px;letter-spacing:0.2px">1</div>
<div class="cell" style="left:292px;top:856px;width:120px;letter-spacing:0.2px">140.00</div>
<div class="cell" style="left:413px;top:856px;width:71px;letter-spacing:0.2px">4.64</div>
<div class="cell" style="left:485px;top:856px;width:71px;letter-spacing:0.2px">157.82</div>
<div class="cell" style="left:683px;top:856px;width:73px;padding:0;text-align:left;font-size:10.5px">windigkeitslinie</div>
<div class="a" style="left:219px;top:894px;width:611px;height:1px;background:#808080"></div>
<div class="cell" style="left:220px;top:876px;width:71px;letter-spacing:0.2px">1</div>
<div class="cell" style="left:292px;top:876px;width:120px;letter-spacing:0.2px">150.00</div>
<div class="cell" style="left:413px;top:876px;width:71px;letter-spacing:0.2px">5.96</div>
<div class="cell" style="left:485px;top:876px;width:71px;letter-spacing:0.2px">211.04</div>
<div class="cell" style="left:683px;top:876px;width:73px;padding:0;text-align:left;font-size:10.5px">windigkeitslinie</div>
<div class="a" style="left:219px;top:914px;width:611px;height:1px;background:#808080"></div>
<div class="cell" style="left:220px;top:896px;width:71px;letter-spacing:0.2px">1</div>
<div class="cell" style="left:292px;top:896px;width:120px;letter-spacing:0.2px">160.00</div>
<div class="cell" style="left:413px;top:896px;width:71px;letter-spacing:0.2px">7.47</div>
<div class="cell" style="left:485px;top:896px;width:71px;letter-spacing:0.2px">276.24</div>
<div class="cell" style="left:683px;top:896px;width:73px;padding:0;text-align:left;font-size:10.5px">windigkeitslinie</div>
<div class="a" style="left:219px;top:934px;width:611px;height:1px;background:#808080"></div>
<div class="cell" style="left:220px;top:916px;width:71px;letter-spacing:0.2px">1</div>
<div class="cell" style="left:292px;top:916px;width:120px;letter-spacing:0.2px">170.00</div>
<div class="cell" style="left:413px;top:916px;width:71px;letter-spacing:0.2px">9.46</div>
<div class="cell" style="left:485px;top:916px;width:71px;letter-spacing:0.2px">367.46</div>
<div class="cell" style="left:683px;top:916px;width:73px;padding:0;text-align:left;font-size:10.5px">windigkeitslinie</div>
<div class="a" style="left:219px;top:954px;width:611px;height:1px;background:#808080"></div>
<div class="cell" style="left:220px;top:936px;width:71px;letter-spacing:0.2px">1</div>
<div class="cell" style="left:292px;top:936px;width:120px;letter-spacing:0.2px">180.00</div>
<div class="cell" style="left:413px;top:936px;width:71px;letter-spacing:0.2px">12.46</div>
<div class="cell" style="left:485px;top:936px;width:71px;letter-spacing:0.2px">513.23</div>
<div class="cell" style="left:683px;top:936px;width:73px;padding:0;text-align:left;font-size:10.5px">windigkeitslinie</div>
<div class="a" style="left:219px;top:974px;width:611px;height:1px;background:#808080"></div>
<div class="cell" style="left:220px;top:956px;width:71px;letter-spacing:0.2px">1</div>
<div class="cell" style="left:292px;top:956px;width:120px;letter-spacing:0.2px">190.00</div>
<div class="cell" style="left:413px;top:956px;width:71px;letter-spacing:0.2px">15.26</div>
<div class="cell" style="left:485px;top:956px;width:71px;letter-spacing:0.2px">657.31</div>
<div class="cell" style="left:683px;top:956px;width:73px;padding:0;text-align:left;font-size:10.5px">windigkeitslinie</div>
<div class="a" style="left:219px;top:994px;width:611px;height:1px;background:#808080"></div>
<div class="cell" style="left:220px;top:976px;width:71px;letter-spacing:0.2px">1</div>
<div class="cell" style="left:292px;top:976px;width:120px;letter-spacing:0.2px">200.00</div>
<div class="cell" style="left:413px;top:976px;width:71px;letter-spacing:0.2px">18.71</div>
<div class="cell" style="left:485px;top:976px;width:71px;letter-spacing:0.2px">844.50</div>
<div class="cell" style="left:683px;top:976px;width:73px;padding:0;text-align:left;font-size:10.5px"><span style="position:absolute;left:-2px;top:0">vindigkeit-Ende</span></div>
<div class="a" style="left:219px;top:1014px;width:611px;height:1px;background:#808080"></div>
<div class="a" style="left:219px;top:1034px;width:611px;height:1px;background:#808080"></div>
<div class="a" style="left:610px;top:977px;width:16px;height:15px"><svg width="16" height="15"><path d="M1 0 V14 H16" stroke="#303030" fill="none"/><path d="M1 4 H15 M1 8 H15" stroke="#909090" stroke-width="0.6"/><path d="M2 10 L5 3 L8 9 L11 4 L15 6" stroke="#2030E0" fill="none"/><path d="M2 12 L6 9 L10 11 L15 3" stroke="#E02020" fill="none"/><rect x="2" y="11" width="5" height="3" fill="#000"/></svg></div>
<div class="a" style="left:830px;top:724px;width:19px;height:300px;background:linear-gradient(90deg,#F4F2EA,#FDFDFA)"></div>
<div class="a" style="left:832px;top:725px;width:16px;height:17px;border-radius:2px;background:linear-gradient(#DCE6FC,#C2D2F8);border:1px solid #B8C8F0"><svg width="14" height="15" style="position:absolute;left:0;top:0"><path d="M3 9 L7 5 L11 9" stroke="#4D6185" stroke-width="2" fill="none"/></svg></div>
<div class="a" style="left:832px;top:744px;width:16px;height:17px;border-radius:2px;background:linear-gradient(90deg,#C8D6FA,#B8CAF6);border:1px solid #B0C4F0"><svg width="14" height="15" style="position:absolute;left:0;top:0"><path d="M4 4 H10 M4 7 H10 M4 10 H10" stroke="#8EA8E8" stroke-width="1"/></svg></div>
<div class="a" style="left:850px;top:723px;width:4px;height:301px;background:#0A50E0"></div>
</body></html>
